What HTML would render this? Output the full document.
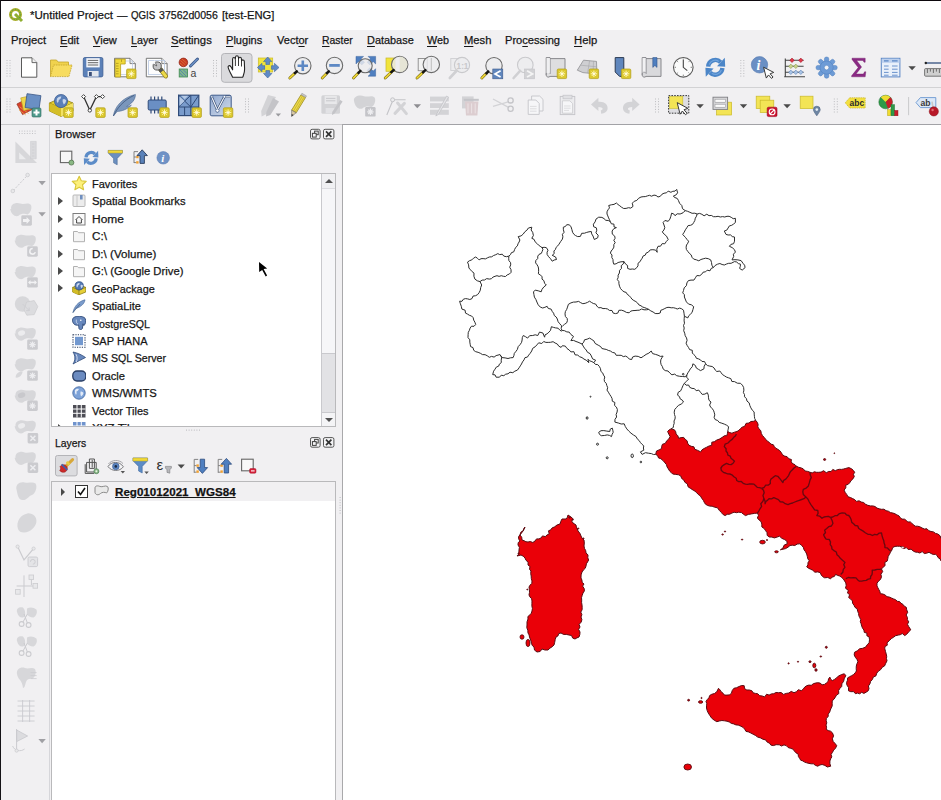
<!DOCTYPE html>
<html>
<head>
<meta charset="utf-8">
<title>QGIS</title>
<style>
html,body{margin:0;padding:0;overflow:hidden;}
body{width:941px;height:800px;overflow:hidden;background:#f0f0f0;font-family:"Liberation Sans",sans-serif;font-size:12px;color:#111;position:relative;}
.abs{position:absolute;}
.t{position:absolute;white-space:nowrap;line-height:14px;color:#161616;-webkit-text-stroke:0.25px #161616;}
#title{left:0;top:0;width:941px;height:30px;background:#fff;}
#menubar{left:0;top:30px;width:941px;height:22px;background:#f1f0f2;}

#menubar u{text-decoration-thickness:1px;text-underline-offset:2.2px;}
#tb1{left:0;top:52px;width:941px;height:35px;background:#f1f0f2;}
#tb2{left:0;top:88px;width:941px;height:36px;background:#f1f0f2;}
.hline{position:absolute;left:0;width:941px;height:1px;background:#d2d2d4;}
#lefttb{left:0;top:125px;width:50px;height:675px;background:#f1f0f2;}
#browser{left:50px;top:125px;width:292px;height:310px;background:#f1f0f2;}
#layers{left:50px;top:435px;width:292px;height:365px;overflow:hidden;background:#f1f0f2;}
.tree{position:absolute;background:#fff;border:1px solid #b9b9bb;box-sizing:border-box;overflow:hidden;}
#canvas{left:342px;top:124px;width:599px;height:676px;background:#fff;border-left:1px solid #a9a9ab;border-top:1px solid #a2a2a6;box-sizing:border-box;}
.row{position:absolute;left:0;width:270px;height:17.45px;}
.row .t{left:40px;top:1.5px;font-size:12.2px;}
.arr{position:absolute;left:6px;top:4.5px;width:0;height:0;border-left:5px solid #4a4a4a;border-top:4px solid transparent;border-bottom:4px solid transparent;}
.ic{position:absolute;}
#edge-top{left:0;top:0;width:941px;height:1px;background:#0c080c;}
#edge-left{left:0;top:0;width:1px;height:800px;background:#141216;}
</style>
</head>
<body>
<!-- TITLE BAR -->
<div id="title" class="abs">
  <svg class="ic" style="left:8px;top:7px" width="16" height="16" viewBox="0 0 16 16"><circle cx="7.5" cy="7.5" r="5" fill="none" stroke="#a9ae2b" stroke-width="3"/><path d="M7 7 L14 14" stroke="#8fae30" stroke-width="3"/><circle cx="7.5" cy="7.5" r="5" fill="none" stroke="#3fa04a" stroke-width="1" stroke-dasharray="1.2 1.6"/></svg>
  <span class="t" style="left:29.5px;top:8.2px;font-size:11.7px;transform-origin:0 0;transform:scaleX(0.9903);">*Untitled Project</span>
  <span class="t" style="left:117px;top:8.2px;font-size:11.7px;transform-origin:0 0;transform:scaleX(0.8984);">—</span>
  <span class="t" style="left:131.2px;top:8.2px;font-size:11.7px;transform-origin:0 0;transform:scaleX(0.8312);">QGIS</span>
  <span class="t" style="left:159.2px;top:8.2px;font-size:11.7px;transform-origin:0 0;transform:scaleX(0.9044);">37562d0056</span>
  <span class="t" style="left:221.5px;top:8.2px;font-size:11.7px;transform-origin:0 0;transform:scaleX(0.9622);">[test-ENG]</span>
</div>
<!-- MENU BAR -->
<div id="menubar" class="abs">
  <span class="t" style="left:11.2px;top:2.5px;font-size:11.7px;transform-origin:0 0;transform:scaleX(0.9614);">Pro<u>j</u>ect</span>
  <span class="t" style="left:60px;top:2.5px;font-size:11.7px;transform-origin:0 0;transform:scaleX(0.9526);"><u>E</u>dit</span>
  <span class="t" style="left:93.2px;top:2.5px;font-size:11.7px;transform-origin:0 0;transform:scaleX(0.9467);"><u>V</u>iew</span>
  <span class="t" style="left:131.2px;top:2.5px;font-size:11.7px;transform-origin:0 0;transform:scaleX(0.9158);"><u>L</u>ayer</span>
  <span class="t" style="left:171.2px;top:2.5px;font-size:11.7px;transform-origin:0 0;transform:scaleX(0.9660);"><u>S</u>ettings</span>
  <span class="t" style="left:226.2px;top:2.5px;font-size:11.7px;transform-origin:0 0;transform:scaleX(0.9467);"><u>P</u>lugins</span>
  <span class="t" style="left:277.4px;top:2.5px;font-size:11.7px;transform-origin:0 0;transform:scaleX(0.9436);">Vect<u>o</u>r</span>
  <span class="t" style="left:322.4px;top:2.5px;font-size:11.7px;transform-origin:0 0;transform:scaleX(0.8915);"><u>R</u>aster</span>
  <span class="t" style="left:366.9px;top:2.5px;font-size:11.7px;transform-origin:0 0;transform:scaleX(0.9331);"><u>D</u>atabase</span>
  <span class="t" style="left:427.3px;top:2.5px;font-size:11.7px;transform-origin:0 0;transform:scaleX(0.9227);"><u>W</u>eb</span>
  <span class="t" style="left:464.2px;top:2.5px;font-size:11.7px;transform-origin:0 0;transform:scaleX(0.9612);"><u>M</u>esh</span>
  <span class="t" style="left:505.4px;top:2.5px;font-size:11.7px;transform-origin:0 0;transform:scaleX(0.9508);">Pro<u>c</u>essing</span>
  <span class="t" style="left:574.1px;top:2.5px;font-size:11.7px;transform-origin:0 0;transform:scaleX(0.9642);"><u>H</u>elp</span>
</div>
<!-- TOOLBARS -->
<div id="tb1" class="abs"><svg class="abs" style="left:0;top:0" width="941" height="35" viewBox="0 52 941 35">
<rect x="6.5" y="60.0" width="1" height="1" fill="#bdbdc0"/><rect x="9.5" y="60.0" width="1" height="1" fill="#bdbdc0"/><rect x="6.5" y="62.6" width="1" height="1" fill="#bdbdc0"/><rect x="9.5" y="62.6" width="1" height="1" fill="#bdbdc0"/><rect x="6.5" y="65.2" width="1" height="1" fill="#bdbdc0"/><rect x="9.5" y="65.2" width="1" height="1" fill="#bdbdc0"/><rect x="6.5" y="67.8" width="1" height="1" fill="#bdbdc0"/><rect x="9.5" y="67.8" width="1" height="1" fill="#bdbdc0"/><rect x="6.5" y="70.4" width="1" height="1" fill="#bdbdc0"/><rect x="9.5" y="70.4" width="1" height="1" fill="#bdbdc0"/><rect x="6.5" y="73.0" width="1" height="1" fill="#bdbdc0"/><rect x="9.5" y="73.0" width="1" height="1" fill="#bdbdc0"/><rect x="6.5" y="75.6" width="1" height="1" fill="#bdbdc0"/><rect x="9.5" y="75.6" width="1" height="1" fill="#bdbdc0"/>
<path d="M21.5 57.8 h10.5 l4.8 4.8 v14.6 h-15.3 z" fill="#fff" stroke="#5a5a5a" stroke-width="1"/><path d="M32 57.8 v4.8 h4.8" fill="#f0f0f0" stroke="#5a5a5a" stroke-width="0.9"/>
<path d="M50.5 76.5 v-16.5 h6 l1.5 2 h10.5 v3" fill="#f0d24e" stroke="#c4a52c" stroke-width="0.8"/><path d="M50.5 76.6 l3 -11.6 h18.6 l-3.2 11.6 z" fill="#f7dc60" stroke="#c4a52c" stroke-width="0.8" stroke-dasharray="1.6 0.8"/>
<rect x="83.3" y="57.5" width="19.6" height="19.4" rx="1.6" fill="#5b80b8" stroke="#3e5e94" stroke-width="0.8"/><rect x="86.3" y="58.2" width="13.4" height="9.2" fill="#f4f6fa"/><path d="M87.8 60.4 h10.4 M87.8 62.7 h10.4 M87.8 65 h10.4" stroke="#555" stroke-width="0.9"/><rect x="87.6" y="71" width="11" height="5.6" fill="#e3e7ee"/><rect x="89" y="72" width="2.8" height="4" fill="#3b4f78"/>
<path d="M114.5 58.3 h15.5 l5.3 5.3 v13.2 h-20.8 z" fill="#fdfdfd" stroke="#6a6a6a" stroke-width="0.9"/><path d="M130 58.3 v5.3 h5.3" fill="#eee" stroke="#6a6a6a" stroke-width="0.8"/><rect x="117" y="61" width="15.5" height="13.5" fill="none" stroke="#b8c8e2" stroke-width="0.7"/><path d="M115.2 59 h10 v5 h-4.6 v13 h-5.4 z" fill="#efd838" stroke="#b89f1c" stroke-width="0.8"/><path d="M116 66 h2.6 M116 68.6 h2.6 M116 71.2 h2.6 M116 73.8 h2.6 M116 63.4 h2.6 M121.5 59.5 v2.4" stroke="#a08a18" stroke-width="0.7"/>
<rect x="126.6" y="69.0" width="9.4" height="9.6" rx="1.2" fill="#dcc92e" stroke="#b09c18" stroke-width="0.7"/><path d="M131.3 70.6 v6.4 M128.1 73.8 h6.4 M129.1 71.6 l4.4 4.4 M133.5 71.6 l-4.4 4.4" stroke="#fff6b8" stroke-width="1" fill="none"/><circle cx="131.3" cy="73.8" r="1.1" fill="#fffbe0"/>
<path d="M146.3 58.3 h15.5 l5.3 5.3 v13.2 h-20.8 z" fill="#fdfdfd" stroke="#6a6a6a" stroke-width="0.9"/><path d="M161.8 58.3 v5.3 h5.3" fill="#eee" stroke="#6a6a6a" stroke-width="0.8"/><rect x="148.6" y="60.6" width="16" height="14" fill="none" stroke="#b8c8e2" stroke-width="0.8"/>
<path d="M160.4 69.4 L165.8 76.2" stroke="#8a7a1a" stroke-width="4.4" stroke-linecap="round"/><path d="M160.4 69.4 L165.8 76.2" stroke="#ecd94a" stroke-width="3" stroke-linecap="round"/><path d="M160.2 69.2 L162 71.400" stroke="#555" stroke-width="4.4"/><circle cx="157.2" cy="66" r="4.1" fill="#c4c4c6" stroke="#4a4a4a" stroke-width="0.9"/><path d="M157.4 66.200 L151.800 63.400 L154.600 60.200 Z" fill="#fbfbfd"/><path d="M153.500 64.200 L156.800 65.900 L155.300 62.300" fill="none" stroke="#4a4a4a" stroke-width="0.8"/>
<circle cx="183.4" cy="62.4" r="4.3" fill="#c83a24" stroke="#8c2414" stroke-width="0.7"/><path d="M180.5 60.5 l5 4.5 M182 59 l4.5 4 M180 63 l3.5 3" stroke="#e0903a" stroke-width="0.6"/><path d="M190.5 66 L197.5 59" stroke="#3d5a8a" stroke-width="3" stroke-linecap="round"/><path d="M190.8 65.7 L197.2 59.3" stroke="#6a8fc4" stroke-width="1.6" stroke-linecap="round"/><rect x="179.2" y="69" width="8.4" height="8" fill="#7fb58c" stroke="#3c8a4e" stroke-width="0.8"/><path d="M180 70 l6.5 6.5 M183 69.5 l4 4 M179.8 73 l3.6 3.6" stroke="#4d7fae" stroke-width="0.8"/><text x="190.6" y="77" font-family="Liberation Sans" font-size="10.5" fill="#444">a</text>
<rect x="213.0" y="60.0" width="1" height="1" fill="#bdbdc0"/><rect x="216.0" y="60.0" width="1" height="1" fill="#bdbdc0"/><rect x="213.0" y="62.6" width="1" height="1" fill="#bdbdc0"/><rect x="216.0" y="62.6" width="1" height="1" fill="#bdbdc0"/><rect x="213.0" y="65.2" width="1" height="1" fill="#bdbdc0"/><rect x="216.0" y="65.2" width="1" height="1" fill="#bdbdc0"/><rect x="213.0" y="67.8" width="1" height="1" fill="#bdbdc0"/><rect x="216.0" y="67.8" width="1" height="1" fill="#bdbdc0"/><rect x="213.0" y="70.4" width="1" height="1" fill="#bdbdc0"/><rect x="216.0" y="70.4" width="1" height="1" fill="#bdbdc0"/><rect x="213.0" y="73.0" width="1" height="1" fill="#bdbdc0"/><rect x="216.0" y="73.0" width="1" height="1" fill="#bdbdc0"/><rect x="213.0" y="75.6" width="1" height="1" fill="#bdbdc0"/><rect x="216.0" y="75.6" width="1" height="1" fill="#bdbdc0"/>
<rect x="221.5" y="53.5" width="30.5" height="28.8" rx="3" fill="#dadadd" stroke="#b4b4b8" stroke-width="1"/>
<path d="M232.6 77.2 C231 74 229 70.5 228.2 67.6 C227.6 65.6 229.6 64.8 230.8 66.6 L232.6 69.8 L232.6 59.2 C232.6 57 235.2 57 235.3 59.2 L235.5 57.3 C235.6 55.2 238.3 55.2 238.4 57.3 L238.6 58.6 C238.8 56.8 241.3 56.9 241.4 58.8 L241.6 61 C241.9 59.4 244.2 59.6 244.3 61.4 L244.6 69 C244.7 72.5 243.6 74.6 242.8 77.2 Z" fill="#fff" stroke="#222" stroke-width="1.1" stroke-linejoin="round"/><path d="M235.4 59.5 v6.5 M238.5 58.5 v7.5 M241.5 61 v5.5" stroke="#222" stroke-width="0.9"/>
<rect x="258.3" y="58" width="14.4" height="14" fill="#f1e43c" stroke="#c9b92a" stroke-width="0.7"/>
<g fill="#5f8ac6" stroke="#40679f" stroke-width="0.6"><path d="M267.7 57 l4.2 4.6 h-2.4 v3 h-3.6 v-3 h-2.4 z"/><path d="M267.7 78 l4.2 -4.6 h-2.4 v-3 h-3.6 v3 h-2.4 z"/><path d="M257.4 67.5 l4.6 -4.2 v2.4 h3 v3.6 h-3 v2.4 z"/><path d="M279 67.5 l-4.6 -4.2 v2.4 h-3 v3.6 h3 v2.4 z"/></g><rect x="265.2" y="65" width="5" height="5" fill="#f1e43c"/>
<circle cx="302.8" cy="65.7" r="8.2" fill="#ebebee" fill-opacity="0.82" stroke="#6a6a6a" stroke-width="1.1"/><path d="M294.9 73.2 L289.8 78.0" stroke="#7a6a10" stroke-width="2.8" stroke-linecap="round"/><path d="M294.9 73.2 L289.8 78.0" stroke="#f0d834" stroke-width="1.7" stroke-linecap="round"/><path d="M296.8 71.3 L294.9 73.2" stroke="#151515" stroke-width="2.5" stroke-linecap="round"/>
<path d="M297.6 65.7 h10.4 M302.8 60.5 v10.4" stroke="#5d88c4" stroke-width="2.6"/>
<circle cx="334.5" cy="65.4" r="8.2" fill="#ebebee" fill-opacity="0.82" stroke="#6a6a6a" stroke-width="1.1"/><path d="M326.9 73.2 L322.2 78.0" stroke="#7a6a10" stroke-width="2.8" stroke-linecap="round"/><path d="M326.9 73.2 L322.2 78.0" stroke="#f0d834" stroke-width="1.7" stroke-linecap="round"/><path d="M328.8 71.3 L326.9 73.2" stroke="#151515" stroke-width="2.5" stroke-linecap="round"/>
<path d="M329.2 65.4 h10.6" stroke="#5d88c4" stroke-width="2.8"/>
<g fill="#4f7fc0" stroke="#3a639c" stroke-width="0.5"><path d="M356 56.4 h7.5 l-2.4 2.4 l3.4 3.4 l-2.7 2.7 l-3.4 -3.4 l-2.4 2.4 z"/><path d="M375.6 56.4 v7.5 l-2.4 -2.4 l-3.4 3.4 l-2.7 -2.7 l3.4 -3.4 l-2.4 -2.4 z"/><path d="M375.6 76.2 h-7.5 l2.4 -2.4 l-3.4 -3.4 l2.7 -2.7 l3.4 3.4 l2.4 -2.4 z"/></g>
<circle cx="365.2" cy="65.8" r="7.0" fill="#ebebee" fill-opacity="0.82" stroke="#6a6a6a" stroke-width="1.1"/><path d="M358.4 72.9 L353.5 78.0" stroke="#7a6a10" stroke-width="2.8" stroke-linecap="round"/><path d="M358.4 72.9 L353.5 78.0" stroke="#f0d834" stroke-width="1.7" stroke-linecap="round"/><path d="M360.4 70.9 L358.4 72.9" stroke="#151515" stroke-width="2.5" stroke-linecap="round"/>
<rect x="386" y="58" width="9" height="13.3" fill="#f1e43c" stroke="#c9b92a" stroke-width="0.7"/>
<circle cx="399.7" cy="64.4" r="8.2" fill="#ebebee" fill-opacity="0.82" stroke="#6a6a6a" stroke-width="1.1"/><path d="M391.3 72.2 L385.2 78.0" stroke="#7a6a10" stroke-width="2.8" stroke-linecap="round"/><path d="M391.3 72.2 L385.2 78.0" stroke="#f0d834" stroke-width="1.7" stroke-linecap="round"/><path d="M393.7 70.0 L391.3 72.2" stroke="#151515" stroke-width="2.5" stroke-linecap="round"/>
<path d="M399.7 56.6 a7.8 7.8 0 0 1 0 15.6 z" fill="#e4e2cf" opacity="0.8"/>
<rect x="418.2" y="58.5" width="9" height="12.2" fill="#f2f2f2" stroke="#8a8a8a" stroke-width="0.9"/>
<circle cx="431.3" cy="64.4" r="8.2" fill="#ebebee" fill-opacity="0.82" stroke="#6a6a6a" stroke-width="1.1"/><path d="M423.0 72.3 L417.0 78.0" stroke="#7a6a10" stroke-width="2.8" stroke-linecap="round"/><path d="M423.0 72.3 L417.0 78.0" stroke="#f0d834" stroke-width="1.7" stroke-linecap="round"/><path d="M425.4 70.1 L423.0 72.3" stroke="#151515" stroke-width="2.5" stroke-linecap="round"/>
<path d="M431.3 58 v12.6" stroke="#bdbdbd" stroke-width="1"/>
<rect x="450.8" y="58.5" width="8" height="12" fill="#ececee" stroke="#cfcfd2" stroke-width="0.9"/>
<circle cx="462.0" cy="65.0" r="7.6" fill="#ececee" fill-opacity="0.82" stroke="#c9c9cc" stroke-width="1.1"/><path d="M456.8 70.5 L449.8 78.0" stroke="#d0d0d3" stroke-width="2.6" stroke-linecap="round"/>
<text x="456.6" y="69" font-family="Liberation Sans" font-weight="bold" font-size="8.2" fill="#c8c8cb">1:1</text>
<circle cx="494.0" cy="65.7" r="8.2" fill="#ebebee" fill-opacity="0.82" stroke="#6a6a6a" stroke-width="1.1"/><path d="M486.4 73.3 L481.8 78.0" stroke="#7a6a10" stroke-width="2.8" stroke-linecap="round"/><path d="M486.4 73.3 L481.8 78.0" stroke="#f0d834" stroke-width="1.7" stroke-linecap="round"/><path d="M488.2 71.5 L486.4 73.3" stroke="#151515" stroke-width="2.5" stroke-linecap="round"/>
<rect x="492.8" y="69" width="10" height="9.8" fill="#5f86bd" stroke="#3d5a8a" stroke-width="0.6"/><path d="M500.6 70.8 l-5.6 3.1 l5.6 3.1" fill="none" stroke="#fff" stroke-width="1.7"/>
<circle cx="525.3" cy="65.0" r="7.8" fill="#ececee" fill-opacity="0.82" stroke="#c9c9cc" stroke-width="1.1"/><path d="M520.1 70.8 L513.6 78.0" stroke="#d0d0d3" stroke-width="2.6" stroke-linecap="round"/>
<rect x="524.6" y="69" width="10" height="9.8" fill="#d2d2d5" stroke="#c2c2c6" stroke-width="0.6"/><path d="M527 70.8 l5.6 3.1 l-5.6 3.1" fill="none" stroke="#f4f4f4" stroke-width="1.7"/>
<path d="M546.2 57.6 h3.8 v1 h15 v17.8 h-15 a2.2 2.2 0 0 1 -3.8 -1.2 z" fill="#dedee0" stroke="#7e7e82" stroke-width="0.9"/><path d="M550.2 58.4 v15.2 a2 2 0 0 0 -4 1.4" fill="none" stroke="#8c8c90" stroke-width="0.8"/><rect x="546.6" y="58" width="3.2" height="15" fill="#efeff1"/>
<rect x="557.2" y="69.0" width="9.4" height="9.6" rx="1.2" fill="#dcc92e" stroke="#b09c18" stroke-width="0.7"/><path d="M561.9 70.6 v6.4 M558.7 73.8 h6.4 M559.7 71.6 l4.4 4.4 M564.1 71.6 l-4.4 4.4" stroke="#fff6b8" stroke-width="1" fill="none"/><circle cx="561.9" cy="73.8" r="1.1" fill="#fffbe0"/>
<path d="M583.5 60.2 l13 1.2 l0.4 12.6 l-14 -1.4 l-5.6 -2.4 z" fill="#cfcfd2" stroke="#8e8e92" stroke-width="0.8"/><path d="M580.6 65.2 l16 1.6 M589.6 60.8 l-2 12.4 M593.5 61 l-0.5 13" stroke="#a6a6aa" stroke-width="0.6" fill="none"/>
<rect x="589.2" y="69.0" width="9.4" height="9.6" rx="1.2" fill="#dcc92e" stroke="#b09c18" stroke-width="0.7"/><path d="M593.9 70.6 v6.4 M590.7 73.8 h6.4 M591.7 71.6 l4.4 4.4 M596.1 71.6 l-4.4 4.4" stroke="#fff6b8" stroke-width="1" fill="none"/><circle cx="593.9" cy="73.8" r="1.1" fill="#fffbe0"/>
<path d="M615.2 57.6 h8.6 v18.8 h-4.2 l-4.4 -4.4 z" fill="#5f86bd" stroke="#2c3a52" stroke-width="1"/>
<rect x="621.4" y="69.0" width="9.4" height="9.6" rx="1.2" fill="#dcc92e" stroke="#b09c18" stroke-width="0.7"/><path d="M626.1 70.6 v6.4 M622.9 73.8 h6.4 M623.9 71.6 l4.4 4.4 M628.3 71.6 l-4.4 4.4" stroke="#fff6b8" stroke-width="1" fill="none"/><circle cx="626.1" cy="73.8" r="1.1" fill="#fffbe0"/>
<path d="M642.2 57.6 h3.8 v1 h15 v17.8 h-15 a2.2 2.2 0 0 1 -3.8 -1.2 z" fill="#d9d9dc" stroke="#7e7e82" stroke-width="0.9"/><rect x="642.6" y="58" width="3.2" height="15" fill="#f1f1f3"/><path d="M646.2 58.4 v15.2 a2 2 0 0 0 -4 1.4" fill="none" stroke="#8c8c90" stroke-width="0.8"/><path d="M652.8 57.6 h4.2 v9.8 l-2.1 -2 l-2.1 2 z" fill="#4f7fc0" stroke="#33558c" stroke-width="0.6"/>
<circle cx="683.3" cy="67.3" r="9.8" fill="#fbfbfb" stroke="#5a5a5a" stroke-width="1.1"/><path d="M683.3 60 v7.3 l4 3.4" fill="none" stroke="#444" stroke-width="1.1"/><path d="M683.3 58.6 v1.4 M683.3 74.6 v1.4 M674.6 67.3 h1.4 M690.6 67.3 h1.4 M677.2 61.2 l0.9 0.9 M689.4 61.2 l-0.9 0.9 M677.2 73.4 l0.9 -0.9 M689.4 73.4 l-0.9 -0.9" stroke="#666" stroke-width="0.8"/>
<g fill="none" stroke="#4c86c8" stroke-width="4.4"><path d="M708.2 66.6 A7.2 7.2 0 0 1 720.6 62.2"/><path d="M722.4 68 A7.2 7.2 0 0 1 710 72.400"/></g><g fill="#4c86c8"><path d="M717 66.200 L725.2 66.800 L724.8 57.800 Z"/><path d="M713.600 68.400 L705.400 67.800 L705.800 76.800 Z"/></g><g fill="none" stroke="#7fb0e6" stroke-width="1.2" opacity="0.7"><path d="M709.2 64.6 A6.2 6.2 0 0 1 718.8 61.400"/><path d="M721.4 70 A6.200 6.200 0 0 1 711.800 73.2"/></g>
<rect x="740.3" y="60.0" width="1" height="1" fill="#bdbdc0"/><rect x="743.3" y="60.0" width="1" height="1" fill="#bdbdc0"/><rect x="740.3" y="62.6" width="1" height="1" fill="#bdbdc0"/><rect x="743.3" y="62.6" width="1" height="1" fill="#bdbdc0"/><rect x="740.3" y="65.2" width="1" height="1" fill="#bdbdc0"/><rect x="743.3" y="65.2" width="1" height="1" fill="#bdbdc0"/><rect x="740.3" y="67.8" width="1" height="1" fill="#bdbdc0"/><rect x="743.3" y="67.8" width="1" height="1" fill="#bdbdc0"/><rect x="740.3" y="70.4" width="1" height="1" fill="#bdbdc0"/><rect x="743.3" y="70.4" width="1" height="1" fill="#bdbdc0"/><rect x="740.3" y="73.0" width="1" height="1" fill="#bdbdc0"/><rect x="743.3" y="73.0" width="1" height="1" fill="#bdbdc0"/><rect x="740.3" y="75.6" width="1" height="1" fill="#bdbdc0"/><rect x="743.3" y="75.6" width="1" height="1" fill="#bdbdc0"/>
<circle cx="759.5" cy="64.8" r="8.2" fill="#6a8fc4" stroke="#5579b0" stroke-width="0.6"/><text x="756.6" y="70" font-family="Liberation Serif" font-style="italic" font-weight="bold" font-size="14" fill="#fff">i</text><path d="M763.6 67.2 l0.4 11.2 l2.8 -2.6 l2.2 4 l1.8 -1 l-2.2 -3.8 l3.8 -0.6 z" fill="#fff" stroke="#333" stroke-width="0.9" stroke-linejoin="round" transform="rotate(-12 763.6 67.2)"/>
<path d="M785.3 58.4 V76.8 M784.2 76.8 H805 M785.3 60.3 H803.6 M785.3 66.3 H803.6 M785.3 72.3 H803.6" stroke="#444" stroke-width="1.1" fill="none"/>
<path d="M789.8 60.3 l2.2 -2.2 l2.2 2.2 l-2.2 2.2 z" fill="#e0384a" stroke="#a01828" stroke-width="0.6"/><path d="M798.6 60.3 l2.2 -2.2 l2.2 2.2 l-2.2 2.2 z" fill="#e0384a" stroke="#a01828" stroke-width="0.6"/><path d="M788.6 66.3 l2.2 -2.2 l2.2 2.2 l-2.2 2.2 z" fill="#c9d28c" stroke="#8a9a4a" stroke-width="0.6"/><path d="M793.6 66.3 l2.2 -2.2 l2.2 2.2 l-2.2 2.2 z" fill="#c9d28c" stroke="#8a9a4a" stroke-width="0.6"/><path d="M788.6 72.3 l2.2 -2.2 l2.2 2.2 l-2.2 2.2 z" fill="#a9c4e6" stroke="#5a7fb5" stroke-width="0.6"/><path d="M793.6 72.3 l2.2 -2.2 l2.2 2.2 l-2.2 2.2 z" fill="#a9c4e6" stroke="#5a7fb5" stroke-width="0.6"/><path d="M798.6 72.3 l2.2 -2.2 l2.2 2.2 l-2.2 2.2 z" fill="#a9c4e6" stroke="#5a7fb5" stroke-width="0.6"/>
<g fill="#6d9bd6" stroke="#4f7fbd" stroke-width="0.5"><rect x="824.4" y="57" width="4.4" height="7" rx="2" transform="rotate(0 826.6 67.6)"/><rect x="824.4" y="57" width="4.4" height="7" rx="2" transform="rotate(45 826.6 67.6)"/><rect x="824.4" y="57" width="4.4" height="7" rx="2" transform="rotate(90 826.6 67.6)"/><rect x="824.4" y="57" width="4.4" height="7" rx="2" transform="rotate(135 826.6 67.6)"/><rect x="824.4" y="57" width="4.4" height="7" rx="2" transform="rotate(180 826.6 67.6)"/><rect x="824.4" y="57" width="4.4" height="7" rx="2" transform="rotate(225 826.6 67.6)"/><rect x="824.4" y="57" width="4.4" height="7" rx="2" transform="rotate(270 826.6 67.6)"/><rect x="824.4" y="57" width="4.4" height="7" rx="2" transform="rotate(315 826.6 67.6)"/><circle cx="826.6" cy="67.6" r="6.6"/></g><circle cx="826.6" cy="67.6" r="2.3" fill="#f4f4f6" stroke="#4f7fbd" stroke-width="0.5"/>
<path d="M852 58.2 h13.2 v4 h-1.2 l-1 -1.8 h-6.4 l5 6.6 l-5.6 7 h7.4 l1.2 -2.2 h1.2 l-0.6 5 h-13.6 v-1 l6.6 -8.2 l-6.2 -8.2 z" fill="#8a2a84" stroke="#6e1a68" stroke-width="0.4"/>
<rect x="881.3" y="58.3" width="18.6" height="18.6" fill="#e9f0fa" stroke="#5a86c5" stroke-width="1"/><rect x="881.8" y="58.8" width="17.6" height="4" fill="#bcd0ee"/><path d="M884 60.8 h4.6 M892 60.8 h5.6" stroke="#5a86c5" stroke-width="1.2"/><path d="M884 66 h4.6 M892 66 h5.6 M884 69.2 h4.6 M892 69.2 h5.6 M884 72.4 h4.6 M892 72.4 h5.6 M884 75.2 h4.6 M892 75.2 h5.6" stroke="#6a92cc" stroke-width="1"/>
<path d="M908.4 66.2 h7.4 l-3.7 4 z" fill="#4a4a4a"/>
<path d="M925.6 63 H942" stroke="#33507e" stroke-width="1.3"/><circle cx="925.8" cy="63" r="1.2" fill="#222"/><rect x="924.6" y="68.6" width="18" height="7.6" rx="1" fill="#cfcfcf" stroke="#6a6a6a" stroke-width="0.9"/><path d="M927.4 69 v4 M930.4 69 v2.6 M933.4 69 v4 M936.4 69 v2.6 M939.4 69 v4" stroke="#555" stroke-width="0.8"/>
</svg></div>
<div class="hline" style="top:87px"></div>
<div id="tb2" class="abs"><svg class="abs" style="left:0;top:0" width="941" height="36" viewBox="0 88 941 36">
<rect x="6.5" y="98.5" width="1" height="1" fill="#bdbdc0"/><rect x="9.5" y="98.5" width="1" height="1" fill="#bdbdc0"/><rect x="6.5" y="101.1" width="1" height="1" fill="#bdbdc0"/><rect x="9.5" y="101.1" width="1" height="1" fill="#bdbdc0"/><rect x="6.5" y="103.7" width="1" height="1" fill="#bdbdc0"/><rect x="9.5" y="103.7" width="1" height="1" fill="#bdbdc0"/><rect x="6.5" y="106.3" width="1" height="1" fill="#bdbdc0"/><rect x="9.5" y="106.3" width="1" height="1" fill="#bdbdc0"/><rect x="6.5" y="108.9" width="1" height="1" fill="#bdbdc0"/><rect x="9.5" y="108.9" width="1" height="1" fill="#bdbdc0"/><rect x="6.5" y="111.5" width="1" height="1" fill="#bdbdc0"/><rect x="9.5" y="111.5" width="1" height="1" fill="#bdbdc0"/>
<rect x="19" y="100.5" width="12" height="12" fill="#d8402c" stroke="#8a2a1a" stroke-width="0.6" transform="rotate(-28 25 106.5)"/><path d="M19.5 106 l8 8 M18.5 109 l6 6" stroke="#f0a040" stroke-width="0.7" transform="rotate(-8 25 106)"/><rect x="22" y="96.5" width="12.5" height="13" fill="#efd54a" stroke="#b89a20" stroke-width="0.6" transform="rotate(-12 28 103)"/><rect x="26" y="94.6" width="14" height="14" fill="#6a8fc4" stroke="#3d5a8a" stroke-width="0.8" transform="rotate(8 33 101.6)"/>
<rect x="32" y="108" width="9" height="9" rx="1.2" fill="#4f9a8c" stroke="#2f6a5e" stroke-width="0.6"/><path d="M36.5 109.5 v6 M33.5 112.5 h6" stroke="#fff" stroke-width="2"/>
<path d="M49.4 103 L61 98 L73 103 L73 111 L61 116.4 L49.4 111 Z" fill="#e6d033" stroke="#8c7c14" stroke-width="0.8"/><path d="M49.4 103 L61 108.2 L73 103 M61 108.2 V116.4" fill="none" stroke="#8c7c14" stroke-width="0.8"/><path d="M49.4 103 L61 108.2 L61 116.4 L49.4 111 Z" fill="#d4be28"/><path d="M61 108.2 L73 103 L73 111 L61 116.4 Z" fill="#f2e264"/><circle cx="61" cy="101" r="6.6" fill="#5a7fb8" stroke="#3a5a90" stroke-width="0.7"/><path d="M57 98.6 q2 -2.6 4.4 -2 q-0.4 2.6 -2.6 3.4 q0 2 -1.2 3 q-1.6 -2 -0.6 -4.4z M62.6 99.4 q2.4 -1 3.6 1.2 q-0.4 2.8 -2.4 3.8 q-1.6 -2.4 -1.2 -5z" fill="#c8d6ec"/>
<rect x="63.8" y="107.8" width="9.4" height="9.6" rx="1.2" fill="#dcc92e" stroke="#b09c18" stroke-width="0.7"/><path d="M68.5 109.4 v6.4 M65.3 112.6 h6.4 M66.3 110.4 l4.4 4.4 M70.7 110.4 l-4.4 4.4" stroke="#fff6b8" stroke-width="1" fill="none"/><circle cx="68.5" cy="112.6" r="1.1" fill="#fffbe0"/>
<path d="M83.6 96.6 L89.8 110.2 L96.4 96.6 L102.6 96.6" fill="none" stroke="#333" stroke-width="1.3" stroke-linejoin="round"/><g fill="#fff" stroke="#333" stroke-width="0.9"><path d="M83.6 94.6 l2 2 l-2 2 l-2 -2 z"/><path d="M96.4 94.6 l2 2 l-2 2 l-2 -2 z"/><path d="M102.6 94.6 l2 2 l-2 2 l-2 -2 z"/><circle cx="89.8" cy="110.4" r="1.7"/></g>
<rect x="95.8" y="107.8" width="9.4" height="9.6" rx="1.2" fill="#dcc92e" stroke="#b09c18" stroke-width="0.7"/><path d="M100.5 109.4 v6.4 M97.3 112.6 h6.4 M98.3 110.4 l4.4 4.4 M102.7 110.4 l-4.4 4.4" stroke="#fff6b8" stroke-width="1" fill="none"/><circle cx="100.5" cy="112.6" r="1.1" fill="#fffbe0"/>
<path d="M113.4 116 C114.6 107 122 97.6 135.4 94.4 C135.6 100 131 104 126.6 106.4 C129 106 130.6 105.6 131.4 105.2 C128 109 121 111.6 117.2 111.4 Z" fill="#7a96bc" stroke="#4e6a92" stroke-width="0.6"/><path d="M113.4 116 C117 108 124 100 134 95.4" fill="none" stroke="#3f587e" stroke-width="0.8"/>
<rect x="128.0" y="107.8" width="9.4" height="9.6" rx="1.2" fill="#dcc92e" stroke="#b09c18" stroke-width="0.7"/><path d="M132.7 109.4 v6.4 M129.5 112.6 h6.4 M130.5 110.4 l4.4 4.4 M134.9 110.4 l-4.4 4.4" stroke="#fff6b8" stroke-width="1" fill="none"/><circle cx="132.7" cy="112.6" r="1.1" fill="#fffbe0"/>
<path d="M151 96.4 v4 M154.6 96.4 v4 M158.2 96.4 v4 M161.8 96.4 v4 M151 109.6 v4 M154.6 109.6 v4 M158.2 109.6 v4 M161.8 109.6 v4" stroke="#2f4a78" stroke-width="1.2"/><rect x="148.2" y="100" width="18" height="10" rx="1.2" fill="#6a8fc4" stroke="#2f4a78" stroke-width="1"/>
<rect x="159.8" y="107.8" width="9.4" height="9.6" rx="1.2" fill="#dcc92e" stroke="#b09c18" stroke-width="0.7"/><path d="M164.5 109.4 v6.4 M161.3 112.6 h6.4 M162.3 110.4 l4.4 4.4 M166.7 110.4 l-4.4 4.4" stroke="#fff6b8" stroke-width="1" fill="none"/><circle cx="164.5" cy="112.6" r="1.1" fill="#fffbe0"/>
<rect x="178.6" y="95.2" width="20.2" height="20.4" fill="#7a9ccc" stroke="#2f4a78" stroke-width="1.2"/><path d="M190.8 95.2 V107 M178.6 107 H198.8 M184.6 107 V115.6 M178.6 95.2 L190.8 107 M190.8 95.2 L178.6 107 M198.8 95.2 L190.8 107 M190.8 107 V115.6" stroke="#2f4a78" stroke-width="1" fill="none"/><path d="M179.6 96.6 L184.7 101.1 L179.6 105.8z M181.2 95.8 h7 l-3.5 3.4z" fill="#b4c8e4"/>
<rect x="192.0" y="107.8" width="9.4" height="9.6" rx="1.2" fill="#dcc92e" stroke="#b09c18" stroke-width="0.7"/><path d="M196.7 109.4 v6.4 M193.5 112.6 h6.4 M194.5 110.4 l4.4 4.4 M198.9 110.4 l-4.4 4.4" stroke="#fff6b8" stroke-width="1" fill="none"/><circle cx="196.7" cy="112.6" r="1.1" fill="#fffbe0"/>
<defs><linearGradient id="gv" x1="0" y1="0" x2="1" y2="1"><stop offset="0" stop-color="#90a8cf"/><stop offset="1" stop-color="#d2dcec"/></linearGradient></defs><rect x="210.2" y="95.2" width="21" height="20.6" rx="1.6" fill="url(#gv)" stroke="#3d5a8a" stroke-width="1"/><path d="M211.6 96.8 L217.4 110 L224.4 96.8 L230 96.8" fill="none" stroke="#2f456e" stroke-width="2.4"/><path d="M211.6 96.8 L217.4 110 L224.4 96.8 L230 96.8" fill="none" stroke="#f4f6fa" stroke-width="1.2"/><circle cx="217.4" cy="110.6" r="1.7" fill="#fff" stroke="#3d5a8a" stroke-width="0.7"/><circle cx="224.4" cy="96.8" r="1.3" fill="#fff" stroke="#3d5a8a" stroke-width="0.6"/><circle cx="211.8" cy="96.8" r="1.1" fill="#fff" stroke="#3d5a8a" stroke-width="0.6"/>
<rect x="223.4" y="107.8" width="9.4" height="9.6" rx="1.2" fill="#dcc92e" stroke="#b09c18" stroke-width="0.7"/><path d="M228.1 109.4 v6.4 M224.9 112.6 h6.4 M225.9 110.4 l4.4 4.4 M230.3 110.4 l-4.4 4.4" stroke="#fff6b8" stroke-width="1" fill="none"/><circle cx="228.1" cy="112.6" r="1.1" fill="#fffbe0"/>
<rect x="245.0" y="98.5" width="1" height="1" fill="#bdbdc0"/><rect x="248.0" y="98.5" width="1" height="1" fill="#bdbdc0"/><rect x="245.0" y="101.1" width="1" height="1" fill="#bdbdc0"/><rect x="248.0" y="101.1" width="1" height="1" fill="#bdbdc0"/><rect x="245.0" y="103.7" width="1" height="1" fill="#bdbdc0"/><rect x="248.0" y="103.7" width="1" height="1" fill="#bdbdc0"/><rect x="245.0" y="106.3" width="1" height="1" fill="#bdbdc0"/><rect x="248.0" y="106.3" width="1" height="1" fill="#bdbdc0"/><rect x="245.0" y="108.9" width="1" height="1" fill="#bdbdc0"/><rect x="248.0" y="108.9" width="1" height="1" fill="#bdbdc0"/><rect x="245.0" y="111.5" width="1" height="1" fill="#bdbdc0"/><rect x="248.0" y="111.5" width="1" height="1" fill="#bdbdc0"/>
<g fill="#d3d3d6"><path d="M268 95 l8 2 l-9.4 17 l-5 2.4 l-0.4 -5.4 z"/><path d="M273 98 l6 3.6 l-8.6 13.4 l-4.4 1.6 l0.4 -4.6 z" fill="#c4c4c8"/></g>
<path d="M275.6 113.4 h5.4 l-2.7 3 z" fill="#9a9a9e"/>
<path d="M301 94.8 l4.6 2.6 l-9.4 15.4 l-4.6 -2.6 z" fill="#ecd948" stroke="#9a8a1e" stroke-width="0.8"/><path d="M302.6 95.8 l-9.2 15.4 M304.2 96.8 l-9.2 15.4" stroke="#b8a42a" stroke-width="0.6"/><path d="M291.6 110.2 l4.6 2.6 l-4.6 3.6 z" fill="#d8c8a4" stroke="#6a6a6a" stroke-width="0.6"/><path d="M291.7 114 l1.8 1 l-1.9 1.5 z" fill="#333"/><path d="M301 94.8 l4.6 2.6 l0.9 -1.5 l-4.6 -2.6 z" fill="#c8c8c8" stroke="#8a8a8a" stroke-width="0.5"/>
<rect x="321.4" y="95.2" width="18.6" height="18.6" rx="1.5" fill="#d3d3d6"/><rect x="324.6" y="96" width="12.2" height="8" fill="#e8e8ea"/><path d="M326 98.4 h9.4 M326 100.8 h9.4" stroke="#c4c4c8" stroke-width="0.9"/><rect x="325.6" y="108" width="9" height="5.4" fill="#e2e2e5"/><path d="M342.6 101.6 l-8 12 l-2.6 1.4 l0.2 -3 l8 -12 z" fill="#c4c4c8"/>
<path d="M354 101 C353 96 360 94.4 364 96.2 C368 97.6 371.6 94.6 374.6 97.4 C376.4 100.6 374 106 371.4 107 C368 106 364.6 106.4 362.4 108.4 C359 110 355 107 354 101 Z" fill="#d3d3d6"/>
<rect x="365.2" y="107" width="10.4" height="9.6" rx="1.2" fill="#c4c4c8"/><path d="M370.4 108.6 v6.4 M367.2 111.8 h6.4 M368.2 109.6 l4.4 4.4 M372.6 109.6 l-4.4 4.4" stroke="#ededf0" stroke-width="1.2"/>
<path d="M392.6 101 L386.8 115 M394.4 99.8 H405.6" stroke="#c4c4c8" stroke-width="1.1" fill="none"/><circle cx="392.6" cy="99.8" r="2" fill="#ececee" stroke="#c4c4c8" stroke-width="1"/><path d="M395 113.4 L404.4 103.4 M397.6 103 L406.4 113.6" stroke="#d3d3d6" stroke-width="3" stroke-linecap="round"/>
<path d="M413.6 104.2 h7.4 l-3.7 4 z" fill="#8e8e92"/>
<g fill="#d3d3d6"><rect x="430" y="96.6" width="18.8" height="4.8"/><rect x="430" y="103.2" width="18.8" height="4.8"/><rect x="430" y="109.8" width="18.8" height="5"/></g><path d="M446.6 96 l-9.6 17.4 l-1.2 2.6 l2.6 -1.6 l10 -17 z" fill="#e4e4e7" stroke="#c4c4c8" stroke-width="0.8"/>
<rect x="462" y="96.4" width="11.6" height="12" fill="#d3d3d6"/><path d="M463.8 98.8 h15 v2 h-15z" fill="#c4c4c8"/><path d="M465 101.4 h13.4 l-1 14.2 h-11.4 z" fill="#dccdd0"/><path d="M468 103.4 v10 M471.6 103.4 v10 M475.2 103.4 v10" stroke="#ebe2e4" stroke-width="1"/>
<path d="M493 99 L509 107.6 M493 106.4 L509 101.6" stroke="#d3d3d6" stroke-width="1.4" fill="none"/><circle cx="510.6" cy="100.4" r="2.6" fill="none" stroke="#c4c4c8" stroke-width="1.3"/><circle cx="510.6" cy="108.8" r="2.6" fill="none" stroke="#c4c4c8" stroke-width="1.3"/>
<path d="M531.6 96 h8 l3.4 3.4 v11.6 h-11.4 z" fill="#f4f4f6" stroke="#c4c4c8" stroke-width="0.9"/><path d="M528.2 100 h7.6 l3.4 3.4 v11 h-11 z" fill="#f6f6f8" stroke="#c4c4c8" stroke-width="0.9"/><path d="M530 106.4 h6.6 M530 108.8 h6.6 M530 111.2 h6.6" stroke="#d3d3d6" stroke-width="0.7"/>
<rect x="560.2" y="96.4" width="14.6" height="18.2" fill="#ececee" stroke="#c4c4c8" stroke-width="0.9"/><rect x="563" y="95.2" width="9" height="3.6" fill="#e0e0e3" stroke="#c4c4c8" stroke-width="0.7"/><path d="M562.4 100.8 h7.4 l2.8 2.8 v9.6 h-10.2 z" fill="#f6f6f8" stroke="#c4c4c8" stroke-width="0.7"/><path d="M564 106 h6.6 M564 108.2 h6.6 M564 110.4 h5" stroke="#d3d3d6" stroke-width="0.7"/>
<path d="M591 104.6 l7.4 -6.8 v4 c6 -0.6 9.6 2.4 9.2 7 c-0.4 3 -3 4.8 -6.4 5 l-0.4 -3.4 c2.6 -0.6 3 -3.2 -2.4 -3.4 v4 z" fill="#d3d3d6"/>
<path d="M639.6 104.6 l-7.4 -6.8 v4 c-6 -0.6 -9.6 2.4 -9.2 7 c0.4 3 3 4.8 6.4 5 l0.4 -3.4 c-2.6 -0.6 -3 -3.2 2.4 -3.4 v4 z" fill="#d3d3d6"/>
<rect x="655.0" y="98.5" width="1" height="1" fill="#bdbdc0"/><rect x="658.0" y="98.5" width="1" height="1" fill="#bdbdc0"/><rect x="655.0" y="101.1" width="1" height="1" fill="#bdbdc0"/><rect x="658.0" y="101.1" width="1" height="1" fill="#bdbdc0"/><rect x="655.0" y="103.7" width="1" height="1" fill="#bdbdc0"/><rect x="658.0" y="103.7" width="1" height="1" fill="#bdbdc0"/><rect x="655.0" y="106.3" width="1" height="1" fill="#bdbdc0"/><rect x="658.0" y="106.3" width="1" height="1" fill="#bdbdc0"/><rect x="655.0" y="108.9" width="1" height="1" fill="#bdbdc0"/><rect x="658.0" y="108.9" width="1" height="1" fill="#bdbdc0"/><rect x="655.0" y="111.5" width="1" height="1" fill="#bdbdc0"/><rect x="658.0" y="111.5" width="1" height="1" fill="#bdbdc0"/>
<rect x="668.6" y="95.6" width="20.2" height="17.6" fill="#dedee2" stroke="#222" stroke-width="0.9" stroke-dasharray="1.6 1.2"/><rect x="669.6" y="96.6" width="13.2" height="11.8" fill="#f3e455" stroke="#c9b92a" stroke-width="0.6"/><path d="M677.2 102.6 l0.4 12 l2.9 -2.7 l2.3 4.3 l1.9 -1 l-2.3 -4.2 l4 -0.6 z" fill="#fff" stroke="#333" stroke-width="0.9" stroke-linejoin="round" transform="rotate(-12 677.2 102.6)"/>
<path d="M696.4 104.2 h7.4 l-3.7 4 z" fill="#4a4a4a"/>
<rect x="716.6" y="102.2" width="15" height="12.8" fill="#f3e455" stroke="#c9b92a" stroke-width="0.7"/><rect x="713" y="97.2" width="14.6" height="12.2" fill="#d6d6d9" stroke="#7e7e82" stroke-width="0.9"/><rect x="715" y="99.2" width="10.6" height="3" fill="#fafafa" stroke="#8a8a8e" stroke-width="0.5"/><rect x="715" y="104.2" width="10.6" height="3" fill="#fafafa" stroke="#8a8a8e" stroke-width="0.5"/>
<path d="M739.8 104.2 h7.4 l-3.7 4 z" fill="#4a4a4a"/>
<rect x="756.2" y="96.2" width="13.6" height="12.4" fill="#f3e455" stroke="#c9b92a" stroke-width="0.7"/><rect x="760.2" y="100.2" width="13.6" height="12.4" fill="#f3e455" stroke="#c9b92a" stroke-width="0.7"/><rect x="767.2" y="107.2" width="9.8" height="9.4" rx="1.4" fill="#cc1230" stroke="#98081e" stroke-width="0.6"/><circle cx="772.1" cy="111.9" r="2.9" fill="none" stroke="#fff" stroke-width="1.1"/><path d="M770 114 l4.2 -4.2" stroke="#fff" stroke-width="1.1"/>
<path d="M783.4 104.2 h7.4 l-3.7 4 z" fill="#4a4a4a"/>
<rect x="800.2" y="96.2" width="12.8" height="12.4" fill="#f3e455" stroke="#c9b92a" stroke-width="0.7"/><path d="M816.8 115.8 C814 112 813.4 110.6 813.4 109.6 a3.4 3.4 0 0 1 6.8 0 c0 1 -0.6 2.4 -3.4 6.2 z" fill="#6e86a4" stroke="#4a607e" stroke-width="0.6"/><circle cx="816.8" cy="109.6" r="1.3" fill="#e8eef6"/>
<rect x="833.8" y="98.5" width="1" height="1" fill="#bdbdc0"/><rect x="836.8" y="98.5" width="1" height="1" fill="#bdbdc0"/><rect x="833.8" y="101.1" width="1" height="1" fill="#bdbdc0"/><rect x="836.8" y="101.1" width="1" height="1" fill="#bdbdc0"/><rect x="833.8" y="103.7" width="1" height="1" fill="#bdbdc0"/><rect x="836.8" y="103.7" width="1" height="1" fill="#bdbdc0"/><rect x="833.8" y="106.3" width="1" height="1" fill="#bdbdc0"/><rect x="836.8" y="106.3" width="1" height="1" fill="#bdbdc0"/><rect x="833.8" y="108.9" width="1" height="1" fill="#bdbdc0"/><rect x="836.8" y="108.9" width="1" height="1" fill="#bdbdc0"/><rect x="833.8" y="111.5" width="1" height="1" fill="#bdbdc0"/><rect x="836.8" y="111.5" width="1" height="1" fill="#bdbdc0"/>
<path d="M845.2 102.8 l4.4 -5 h15.6 v10.2 h-15.6 z" fill="#f3e040" stroke="#c9b52a" stroke-width="0.7" stroke-dasharray="1.5 0.7"/><text x="849.6" y="106.2" font-family="Liberation Sans" font-weight="bold" font-size="8.8" fill="#2a2a2a" textLength="14.6" lengthAdjust="spacingAndGlyphs">abc</text>
<circle cx="885.6" cy="102" r="6.8" fill="#2e9a48" stroke="#1e6a30" stroke-width="0.5"/><path d="M885.6 102 L880.8 97.2 A6.8 6.8 0 0 1 890.4 97.2 Z" fill="#f0dc30"/><path d="M885.6 102 L890.4 97.2 A6.8 6.8 0 0 1 888 108.4 Z" fill="#c81e2a"/><rect x="887.4" y="109.6" width="3.6" height="6.2" fill="#f0dc30" stroke="#a8981c" stroke-width="0.4"/><rect x="891" y="104.6" width="3.6" height="11.2" fill="#2e9a48" stroke="#1e6a30" stroke-width="0.4"/><rect x="894.6" y="110.4" width="3.4" height="5.4" fill="#c81e2a" stroke="#8a1018" stroke-width="0.4"/>
<path d="M908.6 97 V115.2" stroke="#c9c9cc" stroke-width="1"/>
<path d="M916 102.6 l4.4 -5 h15.4 v10 h-15.4 z" fill="#dce8f8" stroke="#6a96d0" stroke-width="0.9"/><text x="920.6" y="106" font-family="Liberation Sans" font-weight="bold" font-size="8.6" fill="#3a3a3a">ab</text><path d="M932 101.6 l1 6" stroke="#c8c8c8" stroke-width="1.6"/><circle cx="933.8" cy="111.4" r="4.6" fill="#b81828" stroke="#8a0e1a" stroke-width="0.5"/><circle cx="932.6" cy="110" r="1.2" fill="#e06a72"/>
</svg></div>
<div class="hline" style="top:124px;background:#c9c9cb"></div>
<!-- LEFT TOOLBAR -->
<div id="lefttb" class="abs"><svg class="abs" style="left:0;top:0" width="50" height="675" viewBox="0 125 50 675">
<rect x="19.0" y="130.6" width="1" height="1" fill="#c2c2c6"/><rect x="19.0" y="133" width="1" height="1" fill="#c2c2c6"/>
<rect x="21.6" y="130.6" width="1" height="1" fill="#c2c2c6"/><rect x="21.6" y="133" width="1" height="1" fill="#c2c2c6"/>
<rect x="24.2" y="130.6" width="1" height="1" fill="#c2c2c6"/><rect x="24.2" y="133" width="1" height="1" fill="#c2c2c6"/>
<rect x="26.8" y="130.6" width="1" height="1" fill="#c2c2c6"/><rect x="26.8" y="133" width="1" height="1" fill="#c2c2c6"/>
<rect x="29.4" y="130.6" width="1" height="1" fill="#c2c2c6"/><rect x="29.4" y="133" width="1" height="1" fill="#c2c2c6"/>
<rect x="32.0" y="130.6" width="1" height="1" fill="#c2c2c6"/><rect x="32.0" y="133" width="1" height="1" fill="#c2c2c6"/>
<rect x="34.6" y="130.6" width="1" height="1" fill="#c2c2c6"/><rect x="34.6" y="133" width="1" height="1" fill="#c2c2c6"/>
<path d="M15.4 141.4 L15.4 163 L37 163 Z" fill="#d7d7da"/><path d="M19.2 152.6 L19.2 159.2 L26 159.2 Z" fill="#ececee"/><path d="M30.6 141.4 h5.6 v17.4 h-5.6 z" fill="#dadadd" stroke="#cbcbcf" stroke-width="0.6"/><path d="M32 144 h2.4 M32 147 h2.4 M32 150 h2.4 M32 153 h2.4 M32 156 h2.4" stroke="#cbcbcf" stroke-width="0.6"/>
<path d="M13.4 190.4 L27.2 175.6" stroke="#cbcbcf" stroke-width="1" stroke-dasharray="2 1.4"/><circle cx="12.8" cy="191" r="1.8" fill="#e8e8ea" stroke="#cbcbcf" stroke-width="0.8"/><circle cx="27.6" cy="175" r="1.8" fill="#e8e8ea" stroke="#cbcbcf" stroke-width="0.8"/>
<path d="M38.4 181.0 h7.4 l-3.7 4.2 z" fill="#a0a0a4"/>
<path d="M11.2 209.0 c-1 -5 5 -7 9 -5.4 c4 1.4 7.6 -1.6 10.6 1.2 c1.8 3.2 -0.6 8.6 -3.2 9.6 c-3.4 -1 -6.8 -0.6 -9 1.4 c-3.4 1.6 -7.4 -1.4 -8.4 -6.8 z" fill="#d7d7da"/>
<rect x="21.3" y="215.3" width="10.6" height="10.4" rx="1.4" fill="#cbcbcf"/><path d="M23.0 219.1 h3.6 v-2.2 l3.4 3.6 l-3.4 3.6 v-2.2 h-3.6 z" fill="#f2f2f4"/>
<path d="M38.4 212.2 h7.4 l-3.7 4.2 z" fill="#a0a0a4"/>
<path d="M15.6 240.6 c-1 -5 5 -7 9 -5.4 c4 1.4 7.6 -1.6 10.6 1.2 c1.8 3.2 -0.6 8.6 -3.2 9.6 c-3.4 -1 -6.8 -0.6 -9 1.4 c-3.4 1.6 -7.4 -1.4 -8.4 -6.8 z" fill="#d7d7da"/>
<rect x="27.2" y="246.3" width="10.6" height="10.4" rx="1.4" fill="#cbcbcf"/><path d="M35.3 252.1 a2.8 2.8 0 1 1 -2.6 -3.6" fill="none" stroke="#f2f2f4" stroke-width="1.5"/>
<path d="M15.6 272.0 c-1 -5 5 -7 9 -5.4 c4 1.4 7.6 -1.6 10.6 1.2 c1.8 3.2 -0.6 8.6 -3.2 9.6 c-3.4 -1 -6.8 -0.6 -9 1.4 c-3.4 1.6 -7.4 -1.4 -8.4 -6.8 z" fill="#d7d7da"/>
<rect x="27.2" y="277.2" width="10.6" height="10.4" rx="1.4" fill="#cbcbcf"/><path d="M28.9 282.4 h7.2" stroke="#f2f2f4" stroke-width="1.6"/><path d="M28.1 282.4 l2.4 -2.4 v4.8 z M36.9 282.4 l-2.4 -2.4 v4.8 z" fill="#f2f2f4"/>
<circle cx="22.6" cy="304" r="7.8" fill="#d7d7da"/><path d="M24 310 l2.6 -8 l7.6 -1.4 l3.6 6 l-3.6 8 l-7.4 0.6 z" fill="#dcdcdf" stroke="#cbcbcf" stroke-width="0.7"/><path d="M22.6 304 l6.6 6.6 m0 0 v-3 m0 3 h-3" stroke="#cbcbcf" stroke-width="0.8" fill="none"/>
<path d="M15.6 333.4 c-1 -5 5 -7 9 -5.4 c4 1.4 7.6 -1.6 10.6 1.2 c1.8 3.2 -0.6 8.6 -3.2 9.6 c-3.4 -1 -6.8 -0.6 -9 1.4 c-3.4 1.6 -7.4 -1.4 -8.4 -6.8 z" fill="#d7d7da"/>
<ellipse cx="21.6" cy="333" rx="3.6" ry="2.6" fill="#ececee" transform="rotate(-20 21.6 333)"/>
<rect x="27.2" y="339.4" width="10.6" height="10.4" rx="1.4" fill="#cbcbcf"/><path d="M32.5 341.4 v6.4 M29.3 344.6 h6.4 M30.3 342.4 l4.4 4.4 M34.7 342.4 l-4.4 4.4" stroke="#ededf0" stroke-width="1.2"/>
<path d="M15.6 364.2 c-1 -5 5 -7 9 -5.4 c4 1.4 7.6 -1.6 10.6 1.2 c1.8 3.2 -0.6 8.6 -3.2 9.6 c-3.4 -1 -6.8 -0.6 -9 1.4 c-3.4 1.6 -7.4 -1.4 -8.4 -6.8 z" fill="#d7d7da"/>
<path d="M15.6 377.6 c0 -4 3.6 -6.6 7 -6 c-0.4 3.6 -3 6.6 -7 6 z" fill="#d7d7da"/>
<rect x="27.2" y="370.4" width="10.6" height="10.4" rx="1.4" fill="#cbcbcf"/><path d="M32.5 372.4 v6.4 M29.3 375.6 h6.4 M30.3 373.4 l4.4 4.4 M34.7 373.4 l-4.4 4.4" stroke="#ededf0" stroke-width="1.2"/>
<path d="M15.6 395.6 c-1 -5 5 -7 9 -5.4 c4 1.4 7.6 -1.6 10.6 1.2 c1.8 3.2 -0.6 8.6 -3.2 9.6 c-3.4 -1 -6.8 -0.6 -9 1.4 c-3.4 1.6 -7.4 -1.4 -8.4 -6.8 z" fill="#d7d7da"/>
<ellipse cx="21.6" cy="395.2" rx="3.8" ry="2.6" fill="#c8c8cc" transform="rotate(-20 21.6 395.2)"/>
<rect x="27.2" y="400.6" width="10.6" height="10.4" rx="1.4" fill="#cbcbcf"/><path d="M32.5 402.6 v6.4 M29.3 405.8 h6.4 M30.3 403.6 l4.4 4.4 M34.7 403.6 l-4.4 4.4" stroke="#ededf0" stroke-width="1.2"/>
<path d="M15.6 426.2 c-1 -5 5 -7 9 -5.4 c4 1.4 7.6 -1.6 10.6 1.2 c1.8 3.2 -0.6 8.6 -3.2 9.6 c-3.4 -1 -6.8 -0.6 -9 1.4 c-3.4 1.6 -7.4 -1.4 -8.4 -6.8 z" fill="#d7d7da"/>
<ellipse cx="21.6" cy="425.8" rx="3.6" ry="2.6" fill="#ececee" transform="rotate(-20 21.6 425.8)"/>
<rect x="27.6" y="433.0" width="10.6" height="10.4" rx="1.4" fill="#cbcbcf"/><path d="M30.4 435.7 l5 5 M35.4 435.7 l-5 5" stroke="#ededf0" stroke-width="1.6"/>
<path d="M15.6 457.8 c-1 -5 5 -7 9 -5.4 c4 1.4 7.6 -1.6 10.6 1.2 c1.8 3.2 -0.6 8.6 -3.2 9.6 c-3.4 -1 -6.8 -0.6 -9 1.4 c-3.4 1.6 -7.4 -1.4 -8.4 -6.8 z" fill="#d7d7da"/>
<rect x="27.6" y="462.6" width="10.6" height="10.4" rx="1.4" fill="#cbcbcf"/><path d="M30.4 465.3 l5 5 M35.4 465.3 l-5 5" stroke="#ededf0" stroke-width="1.6"/>
<path d="M16.6 490 c-1.6 -6 3.4 -8.8 8 -7.6 c4.6 1 8 -1 11 1 c2 3.4 0 9.6 -3.6 11.6 c-4 1.4 -5 5.6 -10 5 c-4 -0.8 -4.4 -6 -5.4 -10 z" fill="#d7d7da"/>
<path d="M18 529 c-2.4 -8 3 -14.6 9.4 -15.6 c5.6 -0.4 9.6 3.4 9 8.6 c-0.8 5.4 -6 10 -12.4 10.6 c-3 0 -5.2 -1.2 -6 -3.600 z" fill="#d7d7da"/>
<path d="M17.6 546.6 L24 560 L33.6 548.6" fill="none" stroke="#cbcbcf" stroke-width="1.2"/><circle cx="17.6" cy="546.6" r="1.6" fill="#e8e8ea" stroke="#cbcbcf" stroke-width="0.8"/><circle cx="33.6" cy="548.6" r="1.6" fill="#e8e8ea" stroke="#cbcbcf" stroke-width="0.8"/><rect x="28" y="557" width="9.6" height="9.6" rx="1.4" fill="#e4e4e7" stroke="#cbcbcf" stroke-width="0.9"/><path d="M30.400 561.8 a2.4 2.4 0 1 1 2.4 2.4" fill="none" stroke="#cbcbcf" stroke-width="0.9"/>
<path d="M24 575.4 v21.6 M16.6 586 h20 M31.4 576 v9" stroke="#cbcbcf" stroke-width="1" fill="none"/><rect x="29" y="575" width="4.6" height="4.6" fill="#e8e8ea" stroke="#cbcbcf" stroke-width="0.8"/><rect x="15.6" y="589.6" width="4.6" height="4.6" fill="#e8e8ea" stroke="#cbcbcf" stroke-width="0.8"/><rect x="33" y="583.6" width="4.6" height="4.6" fill="#e8e8ea" stroke="#cbcbcf" stroke-width="0.8"/>
<path d="M17 612 c-1 -4 3 -5.6 6 -4.4 c2 2 2.6 5 2 8.400 c-2.600 3 -6.6 1.600 -8 -4 z M27 608.600 c3 -2 6.600 -1.400 9.400 0.800 c1.400 3 -0.400 7 -3 8 c-3 0 -5.400 -1 -6.600 -3.400 z" fill="#d7d7da"/><circle cx="21.6" cy="624" r="2.4" fill="none" stroke="#cbcbcf" stroke-width="1.1"/><circle cx="28.600" cy="625" r="2.4" fill="none" stroke="#cbcbcf" stroke-width="1.1"/><path d="M23 622 l4.400 -8 M27.400 623 l-3.400 -9" stroke="#cbcbcf" stroke-width="1"/>
<path d="M17 641 c-1 -4 3 -5.6 6 -4.4 c2 2 2.6 5 2 8.400 c-2.600 3 -6.6 1.600 -8 -4 z M27 637.600 c3 -2 6.600 -1.400 9.400 0.800 c1.400 3 -0.400 7 -3 8 c-3 0 -5.400 -1 -6.600 -3.400 z" fill="#d7d7da"/><circle cx="21.6" cy="653" r="2.4" fill="none" stroke="#cbcbcf" stroke-width="1.1"/><circle cx="28.600" cy="654" r="2.4" fill="none" stroke="#cbcbcf" stroke-width="1.1"/><path d="M23 651 l4.400 -8 M27.400 652 l-3.400 -9" stroke="#cbcbcf" stroke-width="1"/>
<path d="M17 674 c-1 -5 4 -7.600 8 -6 c3.400 1.400 7 -1.400 10 1 c1.800 3.600 0 8.600 -3 10 c-3 -0.600 -5 0.600 -6 3 c-1 3 -1 5.600 -3 6 c-0.600 -4 -1.400 -6 -3 -8 c-1.600 -1.600 -2.600 -3.600 -3 -6 z" fill="#d7d7da"/><path d="M30.600 672.600 h6 M30.600 675.600 h6 M30.600 678.600 h6" stroke="#cbcbcf" stroke-width="0.8"/>
<path d="M17.600 701 h17 M17.600 706 h17 M17.600 711 h17 M17.600 716 h17 M17.600 721 h17 M22.600 700 v22 M29.600 700 v22" stroke="#cbcbcf" stroke-width="0.9" fill="none"/>
<path d="M16.600 730 l11 6 l-11 5.600 z" fill="#dcdcdf" stroke="#cbcbcf" stroke-width="0.9"/><path d="M16.600 729 v23 " stroke="#cbcbcf" stroke-width="1"/><path d="M12.600 746 c2 5 8 6 12 3" fill="none" stroke="#cbcbcf" stroke-width="0.9"/><circle cx="16.600" cy="750.600" r="1.600" fill="#e8e8ea" stroke="#cbcbcf" stroke-width="0.8"/>
<path d="M38.4 739.0 h7.4 l-3.7 4.2 z" fill="#a0a0a4"/>
</svg></div>
<div class="abs" style="left:49px;top:125px;width:1px;height:675px;background:#d6d6da"></div>
<!-- BROWSER PANEL -->
<div id="browser" class="abs">
  <span class="t" style="left:5.2px;top:2px;font-size:11.7px;transform-origin:0 0;transform:scaleX(0.9516);">Browser</span>
  <svg class="abs" style="left:0;top:0" width="292" height="48" viewBox="50 125 292 48">
<rect x="310.5" y="129.3" width="9.6" height="9.6" rx="1.6" fill="#f4f4f6" stroke="#555" stroke-width="1"/><rect x="314.6" y="131.1" width="3.6" height="3.6" fill="none" stroke="#444" stroke-width="1"/><path d="M312.6 136.9 v-3.4 h3.4" fill="none" stroke="#444" stroke-width="1" transform="translate(0,0)"/><rect x="312.4" y="133.3" width="3.8" height="3.8" fill="#f4f4f6" stroke="#444" stroke-width="1"/><rect x="323.5" y="129.3" width="10.4" height="9.6" rx="1.6" fill="#f4f4f6" stroke="#555" stroke-width="1"/><path d="M326 131.4 l5.4 5.4 M331.4 131.4 l-5.4 5.4" stroke="#333" stroke-width="1.7"/>
<rect x="60.4" y="151.2" width="11.4" height="11.4" fill="#f6f6f6" stroke="#666" stroke-width="1.1"/><circle cx="71.4" cy="162.6" r="2.5" fill="#8ab884" stroke="#4a6a48" stroke-width="0.7"/>
<g fill="none" stroke="#5c8cc8" stroke-width="3.2"><path d="M86 157.400 A5.200 5.200 0 0 1 95 154.200"/><path d="M96.200 158.400 A5.200 5.200 0 0 1 87.200 161.600"/></g><g fill="#5c8cc8"><path d="M92.400 157 L98.400 157.500 L98.100 150.800 Z"/><path d="M89.800 158.800 L83.800 158.300 L84.100 165 Z"/></g>
<path d="M108.2 150.4 h14.2 v2.6 l-5.2 5.4 v6.4 l-3.6 -2 v-4.4 l-5.4 -5.4 z" fill="#6b8fc0" stroke="#4a6a96" stroke-width="0.6"/><rect x="108.2" y="150.4" width="14.2" height="2.6" fill="#f0d838" stroke="#c0a820" stroke-width="0.5"/>
<path d="M134 151.6 h4 M134 151.6 v11.4 M134 157 h2.4 M134 162.6 h2.4" stroke="#777" stroke-width="0.9" fill="none"/><rect x="136.2" y="155.8" width="2.4" height="2.4" fill="#f0a030"/><rect x="136.2" y="161.2" width="2.4" height="2.4" fill="#f0a030"/><path d="M142.2 149.8 l5.2 5.8 h-3 v7.8 h-4.4 v-7.8 h-3 z" fill="#5a82ba" stroke="#2c3e5c" stroke-width="0.9" stroke-linejoin="round"/>
<circle cx="163.2" cy="157.8" r="6.3" fill="#6f92c6" stroke="#5579b0" stroke-width="0.5"/><text x="161.2" y="161.8" font-family="Liberation Serif" font-style="italic" font-weight="bold" font-size="11" fill="#fff">i</text>
</svg>
  <div class="tree" style="left:1px;top:48px;width:285px;height:254px;">
    <svg class="ic" style="left:18.5px;top:1.20px" width="16" height="16" viewBox="-0.5 -0.3 14.6 14.6"><path d="M7 0.8 L8.9 5 L13.4 5.5 L10 8.6 L11 13.2 L7 10.8 L3 13.2 L4 8.6 L0.6 5.5 L5.1 5 Z" fill="#fdf07a" stroke="#d8c63a" stroke-width="1" stroke-linejoin="round"/></svg>
<span class="t" style="left:40.2px;top:2.95px;font-size:11.7px;transform-origin:0 0;transform:scaleX(0.9422);">Favorites</span>
<div class="arr" style="left:6px;top:23.15px"></div>
<svg class="ic" style="left:19.5px;top:20.15px" width="14" height="14" viewBox="0 0 14 14"><path d="M1.5 1.5 h3 v10 h8 v-10 h-3" fill="#f3f3f3" stroke="#b5b5b5"/><rect x="1" y="1" width="12" height="11.5" rx="1" fill="#ececec" stroke="#b8b8b8"/><rect x="4.5" y="1" width="1" height="11" fill="#c8c8c8"/><rect x="8" y="1" width="2.6" height="4.5" fill="#6f8fbf"/></svg>
<span class="t" style="left:40.2px;top:20.40px;font-size:11.7px;transform-origin:0 0;transform:scaleX(0.9594);">Spatial Bookmarks</span>
<div class="arr" style="left:6px;top:40.60px"></div>
<svg class="ic" style="left:19.5px;top:37.60px" width="14" height="14" viewBox="0 0 14 14"><rect x="1" y="1.5" width="12" height="11.5" fill="#fafafa" stroke="#7d7d7d"/><path d="M3.5 8 L7 4.5 L10.5 8 M4.6 7.5 V11 H9.4 V7.5" fill="none" stroke="#444" stroke-width="1"/></svg>
<span class="t" style="left:40.2px;top:37.85px;font-size:11.7px;transform-origin:0 0;transform:scaleX(1.0228);">Home</span>
<div class="arr" style="left:6px;top:58.05px"></div>
<svg class="ic" style="left:19.5px;top:55.05px" width="14" height="14" viewBox="0 0 14 14"><path d="M1.5 2.5 h4 l1 1.2 h6 v9 h-11 z" fill="#f5f5f5" stroke="#b0b0b0" stroke-width="1"/></svg>
<span class="t" style="left:40.2px;top:55.30px;font-size:11.7px;transform-origin:0 0;transform:scaleX(0.9975);">C:&#92;</span>
<div class="arr" style="left:6px;top:75.50px"></div>
<svg class="ic" style="left:19.5px;top:72.50px" width="14" height="14" viewBox="0 0 14 14"><path d="M1.5 2.5 h4 l1 1.2 h6 v9 h-11 z" fill="#f5f5f5" stroke="#b0b0b0" stroke-width="1"/></svg>
<span class="t" style="left:40.2px;top:72.75px;font-size:11.7px;transform-origin:0 0;transform:scaleX(0.9915);">D:&#92; (Volume)</span>
<div class="arr" style="left:6px;top:92.95px"></div>
<svg class="ic" style="left:19.5px;top:89.95px" width="14" height="14" viewBox="0 0 14 14"><path d="M1.5 2.5 h4 l1 1.2 h6 v9 h-11 z" fill="#f5f5f5" stroke="#b0b0b0" stroke-width="1"/></svg>
<span class="t" style="left:40.2px;top:90.20px;font-size:11.7px;transform-origin:0 0;transform:scaleX(0.9638);">G:&#92; (Google Drive)</span>
<div class="arr" style="left:6px;top:110.40px"></div>
<svg class="ic" style="left:19.5px;top:107.40px" width="14" height="14" viewBox="0 0 14 14"><path d="M0.6 6.4 L7 3.8 L13.8 6.4 L13.8 11 L7 13.8 L0.6 11 Z" fill="#e6cf38" stroke="#8c7c14" stroke-width="0.8"/><path d="M0.6 6.4 L7 9 L7 13.8 L0.6 11 Z" fill="#d2bc26"/><path d="M0.6 6.4 L7 9 L13.8 6.4 M7 9 V13.8" fill="none" stroke="#8c7c14" stroke-width="0.8"/><circle cx="7.2" cy="4.8" r="4.1" fill="#5478b4" stroke="#34558c" stroke-width="0.8"/><path d="M4.600 3.400 q1.600 -1.800 3.200 -1.200 q-0.300 1.800 -1.800 2.400 q0 1.400 -0.900 2 q-1.100 -1.400 -0.500 -3.200z M8.600 4 q1.600 -0.600 2.400 0.800 q-0.300 1.800 -1.600 2.400 q-1 -1.500 -0.800 -3.200z" fill="#cbd9ee"/></svg>
<span class="t" style="left:40.2px;top:107.65px;font-size:11.7px;transform-origin:0 0;transform:scaleX(0.9278);">GeoPackage</span>
<svg class="ic" style="left:19.5px;top:124.85px" width="14" height="14" viewBox="0 0 14 14"><path d="M1 13.5 C2 8 6 2.5 13 0.8 C12.5 5 8 8.5 3.5 9.5 Z" fill="#7b9ccc" stroke="#4d6f9f" stroke-width="0.7"/><path d="M1 13.5 L8 5" stroke="#3b577f" stroke-width="0.7"/></svg>
<span class="t" style="left:40.2px;top:125.10px;font-size:11.7px;transform-origin:0 0;transform:scaleX(0.9407);">SpatiaLite</span>
<svg class="ic" style="left:19.5px;top:142.30px" width="14" height="14" viewBox="0 0 14 14"><path d="M1.6 1.6 C4.6 -0.4 10.6 -0.2 13 2.2 C14.6 4.6 13.4 8.4 11.8 9.6 L11 7.8 L10.4 12.6 C9.4 14 7.400 13.800 7 12.600 L6.600 9 C4 9.800 1.400 8.600 0.600 5.600 C0.200 3.600 0.800 2.400 1.600 1.600 Z" fill="#6888bd" stroke="#2f4a78" stroke-width="0.9"/><path d="M4.400 3.600 C4 5.600 4.400 7.400 6 8.200" fill="none" stroke="#cfdcf0" stroke-width="0.8"/><circle cx="8.8" cy="4.3" r="0.8" fill="#fff"/></svg>
<span class="t" style="left:40.2px;top:142.55px;font-size:11.7px;transform-origin:0 0;transform:scaleX(0.9109);">PostgreSQL</span>
<svg class="ic" style="left:19.5px;top:159.75px" width="14" height="14" viewBox="0 0 14 14"><rect x="1" y="0.8" width="12" height="12.4" fill="none" stroke="#2c3e5e" stroke-width="1.1" stroke-dasharray="1.2 1.2"/><rect x="3" y="2.8" width="8" height="8.4" fill="#7298cf"/></svg>
<span class="t" style="left:40.2px;top:160.00px;font-size:11.7px;transform-origin:0 0;transform:scaleX(0.9422);">SAP HANA</span>
<svg class="ic" style="left:19.5px;top:177.20px" width="14" height="14" viewBox="0 0 14 14"><path d="M1 1 C6 2 10 4 13.5 6.5 C10 8.5 5 10.5 1 13 C3.5 9 3.5 5 1 1 Z" fill="#6888bd" stroke="#2f4a78" stroke-width="0.8"/><path d="M4 3.2 C5.5 6 5.5 8.5 4.2 11" fill="none" stroke="#e8eefa" stroke-width="0.8"/></svg>
<span class="t" style="left:40.2px;top:177.45px;font-size:11.7px;transform-origin:0 0;transform:scaleX(0.9090);">MS SQL Server</span>
<svg class="ic" style="left:19.5px;top:194.65px" width="14" height="14" viewBox="0 0 14 14"><rect x="0.8" y="2" width="13" height="10" rx="4.2" fill="#6b8bc0" stroke="#2a3f66" stroke-width="1.3"/></svg>
<span class="t" style="left:40.2px;top:194.90px;font-size:11.7px;transform-origin:0 0;transform:scaleX(0.9583);">Oracle</span>
<svg class="ic" style="left:19.5px;top:212.10px" width="14" height="14" viewBox="0 0 14 14"><circle cx="7" cy="7" r="6.2" fill="#7da2d8" stroke="#4a6ea6" stroke-width="0.9"/><path d="M3 4 q2 -2 4 -1 q-1 2 -2.5 2.5 q0.5 2 -0.5 3.5 q-1.5 -2 -1 -5z M8.5 5.5 q2 -0.5 3 1.5 q-0.5 2.5 -2.5 3.5 q-1 -2.5 -0.5 -5z" fill="#e4ecf8"/></svg>
<span class="t" style="left:40.2px;top:212.35px;font-size:11.7px;transform-origin:0 0;transform:scaleX(0.9598);">WMS/WMTS</span>
<svg class="ic" style="left:19.5px;top:229.55px" width="14" height="14" viewBox="0 0 14 14"><rect x="1" y="1" width="12.5" height="12.5" fill="#4d4d55"/><path d="M5 1 V13.5 M9.3 1 V13.5 M1 5 H13.5 M1 9.3 H13.5" stroke="#fff" stroke-width="1"/></svg>
<span class="t" style="left:40.2px;top:229.80px;font-size:11.7px;transform-origin:0 0;transform:scaleX(0.9351);">Vector Tiles</span>
<div class="arr" style="left:6px;top:250.00px"></div>
<svg class="ic" style="left:19.5px;top:247.00px" width="14" height="14" viewBox="0 0 14 14"><rect x="1" y="1" width="12.5" height="12.5" fill="#6f93cd"/><path d="M5 1 V13.5 M9.3 1 V13.5 M1 5 H13.5 M1 9.3 H13.5" stroke="#fff" stroke-width="1"/></svg>
<span class="t" style="left:40.2px;top:247.25px;font-size:11.7px;transform-origin:0 0;transform:scaleX(0.9997);">XYZ Tiles</span>
<div class="abs" style="left:269px;top:0;width:14px;height:252px;background:#f6f6f8;border-left:1px solid #c9c9cd"></div><div class="abs" style="left:270px;top:0;width:13px;height:14px;background:#f0f0f2;border-bottom:1px solid #dcdce0"></div><div class="abs" style="left:270px;top:239px;width:13px;height:13px;background:#f4f4f6"></div>
<div class="abs" style="left:270px;top:179px;width:13px;height:60px;background:#e2e2e5;border-top:1px solid #c9c9cd;border-bottom:1px solid #c9c9cd;box-sizing:border-box"></div>
<div class="abs" style="left:273px;top:4.5px;width:0;height:0;border-bottom:4px solid #505050;border-left:4px solid transparent;border-right:4px solid transparent"></div>
<div class="abs" style="left:273px;top:243.5px;width:0;height:0;border-top:4px solid #505050;border-left:4px solid transparent;border-right:4px solid transparent"></div>
  </div>
</div>
<!-- LAYERS PANEL -->
<div id="layers" class="abs">
  <span class="t" style="left:5.2px;top:0.5px;font-size:11.7px;transform-origin:0 0;transform:scaleX(0.8890);">Layers</span>
  <svg class="abs" style="left:0;top:0" width="292" height="46" viewBox="50 435 292 46">
<rect x="310.5" y="437.6" width="9.6" height="9.6" rx="1.6" fill="#f4f4f6" stroke="#555" stroke-width="1"/><rect x="314.6" y="439.4" width="3.6" height="3.6" fill="none" stroke="#444" stroke-width="1"/><path d="M312.6 445.2 v-3.4 h3.4" fill="none" stroke="#444" stroke-width="1" transform="translate(0,0)"/><rect x="312.4" y="441.6" width="3.8" height="3.8" fill="#f4f4f6" stroke="#444" stroke-width="1"/><rect x="323.5" y="437.6" width="10.4" height="9.6" rx="1.6" fill="#f4f4f6" stroke="#555" stroke-width="1"/><path d="M326 439.7 l5.4 5.4 M331.4 439.7 l-5.4 5.4" stroke="#333" stroke-width="1.7"/>
<rect x="55.5" y="455.5" width="21.6" height="20.4" rx="2" fill="#dcdcdf" stroke="#b4b4b8" stroke-width="1"/>
<path d="M72.6 459.6 l-6.4 6.2" stroke="#d8a83a" stroke-width="3" stroke-linecap="round"/><path d="M60 466.6 c2 -2.6 5 -2.4 6.6 -0.4 c1.6 2.2 0.6 4.6 -1.6 5.8 c-2 0.8 -4 0 -5.4 -1.6 c1.2 -0.4 1.4 -2.2 0.4 -3.8z" fill="#cc2a2a" stroke="#8a1818" stroke-width="0.5"/><path d="M61.6 464.4 l5.6 5.6" stroke="#3a62b0" stroke-width="1.6"/><path d="M66.6 461.8 l2.8 2.8" stroke="#e8d040" stroke-width="2.2"/>
<path d="M89.4 459 h5 v9.4 h-5 z M86.6 462.4 h9.6 v9.6 h-9.6 z" fill="none" stroke="#555" stroke-width="1"/><path d="M85.2 464.2 v9.2 h9" fill="none" stroke="#555" stroke-width="1"/><path d="M92.2 460 v7.6" stroke="#555" stroke-width="1"/><circle cx="96.4" cy="471.2" r="2.5" fill="#8ab884" stroke="#4a7a58" stroke-width="0.7"/><circle cx="96.4" cy="471.2" r="1" fill="#e8f4e4"/>
<path d="M108 466.6 C111 461.2 119.6 460.8 123.4 466.8 C119.6 471.8 111.6 471.6 108 466.6 Z" fill="#f2f2f4" stroke="#7a7a7e" stroke-width="1"/><circle cx="115.8" cy="466.4" r="3.3" fill="#5a84c0" stroke="#3a5a90" stroke-width="0.6"/><circle cx="115.8" cy="466.4" r="1.3" fill="#1a2a44"/><path d="M108.4 464 C111.6 459.6 119.4 459.2 123 463.6" fill="none" stroke="#9a9a9e" stroke-width="0.9"/><path d="M120.6 471 h4.4 l-2.2 2.6 z" fill="#555"/>
<path d="M133 458 h14.6 v2.8 l-5.4 5.6 v6.6 l-3.6 -2 v-4.6 l-5.6 -5.6 z" fill="#5d8cc6" stroke="#3e68a0" stroke-width="0.6"/><rect x="133" y="458" width="14.6" height="3" fill="#f0d838" stroke="#c0a820" stroke-width="0.5"/><path d="M144.4 471.4 h4.4 l-2.2 2.6 z" fill="#555"/>
<text x="156.6" y="469.6" font-family="Liberation Sans" font-size="15" fill="#333">ε</text><path d="M165.4 466.4 h6 v1.6 l-1.6 1.8 v3.4 l-2.8 -0.8 v-2.6 l-1.6 -1.8 z" fill="#b8b8bc" stroke="#7a7a7e" stroke-width="0.6"/>
<path d="M177.6 464.6 h7.2 l-3.6 3.8 z" fill="#4a4a4a"/>
<path d="M194.2 459.4 h4 M194.2 459.4 v13.4 M194.2 465.6 h2.4 M194.2 472.2 h2.4" stroke="#777" stroke-width="0.9" fill="none"/><rect x="196.4" y="464.4" width="2.4" height="2.4" fill="#f0a030"/><rect x="196.4" y="470.4" width="2.4" height="2.4" fill="#f0a030"/><path d="M202.4 473.4 l5.2 -5.8 h-3 v-8.4 h-4.4 v8.4 h-3 z" fill="#4f7fc0" stroke="#2c4a7c" stroke-width="0.8" stroke-linejoin="round"/>
<path d="M218.2 459.4 h4 M218.2 459.4 v13.4 M218.2 465.6 h2.4 M218.2 472.2 h2.4" stroke="#777" stroke-width="0.9" fill="none"/><rect x="220.4" y="464.4" width="2.4" height="2.4" fill="#f0a030"/><rect x="220.4" y="470.4" width="2.4" height="2.4" fill="#f0a030"/><path d="M226.4 458.4 l5.2 5.8 h-3 v8.8 h-4.4 v-8.8 h-3 z" fill="#4f7fc0" stroke="#2c4a7c" stroke-width="0.8" stroke-linejoin="round"/>
<rect x="241.6" y="459.2" width="11.6" height="11.6" fill="#f8f8f8" stroke="#666" stroke-width="1.1"/><rect x="249.6" y="468.6" width="6.4" height="4.6" rx="1.2" fill="#d8203a" stroke="#a01024" stroke-width="0.5"/><path d="M251 470.9 h3.6" stroke="#fff" stroke-width="1.1"/>
</svg>
  <div class="tree" style="left:1px;top:46px;width:285px;height:322px;border-bottom:none;">
    <div class="abs" style="left:0;top:0;width:283px;height:19px;background:#f1f0f2"></div>
<div class="arr" style="left:8.5px;top:5.5px;border-left-width:4.5px"></div>
<div class="abs" style="left:23px;top:3px;width:13px;height:13px;box-sizing:border-box;border:1px solid #333;background:#fff"></div>
<svg class="ic" style="left:23px;top:3px" width="13" height="13" viewBox="0 0 13 13"><path d="M3 6.5 L5.5 9.5 L10 3" fill="none" stroke="#111" stroke-width="1.6"/></svg>
<svg class="ic" style="left:41px;top:2px" width="17" height="14" viewBox="0 0 17 14"><path d="M2 4 C2 1.5 5 1.5 7 2.5 C9.5 3.5 12 1 14.5 2.5 C16 4 15 8 13.5 9 C12 8 9 8 7.5 9.5 C5.5 11.5 2.5 11 2 8.5 Z" fill="#e9e9e9" stroke="#8a8a8a" stroke-width="1"/></svg>
<span class="t" style="left:63px;top:2.5px;font-size:11.7px;transform-origin:0 0;transform:scaleX(0.9926);font-weight:bold;text-decoration:underline;color:#111;">Reg01012021_WGS84</span>
  </div>
</div>
<!-- MAP CANVAS -->
<div id="canvas" class="abs">
<svg id="map" class="abs" style="left:0;top:0" width="598" height="675" viewBox="343 125 598 675">
<g fill="none" stroke="#2c2c2c" stroke-width="1" stroke-linejoin="round">
<path d="M467.5 262.1 L469.5 260.7 L471.8 259.9 L473.6 258.1 L475.7 257.0 L477.5 258.3 L479.1 259.9 L481.0 258.7 L483.1 258.6 L485.4 258.9 L487.3 257.9 L489.3 257.0 L491.7 256.8 L493.6 255.5 L495.8 254.7 L497.8 253.6 L499.7 254.6 L502.3 254.2 L503.8 256.1 L506.4 256.7 L508.9 256.1 L508.7 258.3 L508.9 260.6 L510.6 262.7 L510.7 264.9 L509.7 267.2 L511.0 269.6 L511.1 272.3 L509.4 274.0 L507.2 274.9 L505.5 276.5 L503.4 276.3 L501.3 275.7 L499.1 276.4 L497.0 275.7 L495.0 276.3 L493.0 277.1 L491.4 278.7 L489.3 279.1 L486.7 278.6 L484.5 280.0 L482.1 280.1 L480.0 281.6 L477.3 280.8 L474.9 279.1 L473.9 276.2 L474.0 273.1 L472.1 271.6 L470.5 269.8 L468.9 268.0 L468.6 264.9 Z"/>
<path d="M480.0 281.6 L481.7 285.0 L480.7 287.5 L480.3 290.2 L479.1 292.7 L477.6 294.6 L475.6 295.7 L473.0 296.1 L472.0 298.6 L469.8 299.5 L467.7 298.9 L465.5 298.6 L463.4 299.2 L462.0 301.3 L459.6 301.2 L460.4 303.8 L461.3 306.3 L461.9 309.1 L465.1 310.2 L465.5 313.1 L467.5 314.1 L469.4 315.3 L471.6 316.0 L473.2 317.7 L473.7 320.1 L474.9 322.2 L475.7 324.5 L474.0 326.3 L471.5 326.2 L470.1 328.1 L469.4 330.3 L468.3 332.3 L468.1 334.7 L468.0 337.6 L469.8 339.8 L469.8 342.1 L470.2 344.3 L470.6 346.6 L473.0 347.6 L473.7 350.3 L475.7 351.7 L478.1 352.3 L480.4 353.3 L482.5 354.6 L485.1 354.7 L487.3 355.8 L489.3 357.3 L491.5 356.4 L494.1 357.1 L496.1 355.6 L499.9 354.6 L501.7 357.1 L501.2 360.2 L501.3 362.6 L499.4 364.1 L498.7 366.1 L496.3 367.1 L495.0 369.2 L493.6 371.2 L492.7 374.6 L495.1 374.9 L496.1 377.2 L499.5 377.2 L501.2 375.2 L503.8 375.7 L505.7 374.2 L508.0 373.8 L510.0 372.2 L512.8 372.7 L514.8 371.2 L517.4 370.1 L519.1 367.8 L520.3 365.9 L521.5 364.0 L522.5 361.9 L524.0 359.9 L525.0 357.6 L527.4 357.1 L528.7 355.1 L530.1 353.4 L531.7 351.0 L532.7 348.3 L535.0 346.9 L536.9 344.9 L538.7 342.8 L541.8 343.5 L543.7 341.5 L545.9 342.4 L548.2 342.4 L550.5 342.3 L553.1 341.7 L555.1 343.0 L557.3 344.0 L558.8 346.2 L561.1 347.4 L562.4 345.7 L565.3 346.1 L567.0 348.5 L569.2 350.0 L570.9 351.9 L573.9 351.7 L575.0 354.8 L577.7 355.1 L579.6 356.7 L582.0 357.6 L584.0 359.1 L586.2 360.2 L588.8 362.7 L587.9 359.3 L589.7 360.8 L591.9 361.6 L593.9 362.7 L595.4 364.4 L597.7 364.6 L599.4 366.5 L600.5 368.7 L600.9 371.4 L602.8 373.1 L603.5 375.1 L604.8 377.0 L604.2 379.4 L604.5 381.6 L606.2 383.3 L606.8 385.5 L607.7 387.7 L607.0 390.1 L608.4 392.2 L609.6 394.3 L611.0 396.4 L612.1 398.6 L612.3 401.2 L614.9 402.5 L614.5 405.4 L616.4 407.1 L617.4 409.6 L617.1 412.0 L616.1 414.5 L616.6 417.0 L615.0 419.3 L614.9 422.1 L618.3 423.0 L621.2 424.0 L624.2 423.8 L625.3 426.5 L626.8 428.9 L628.8 431.1 L631.0 433.2 L633.5 435.0 L636.1 436.6 L637.2 438.8 L639.1 440.5 L640.4 442.5 L642.0 444.3 L643.8 445.9 L643.4 448.0 L643.8 450.2 L640.4 451.9 L642.1 454.4 L645.5 452.7 L648.4 453.2 L651.4 453.6 L653.4 454.5 L655.7 454.4"/>
<path d="M508.9 256.1 L510.5 254.6 L511.4 252.7 L513.8 251.8 L514.6 249.5 L515.7 247.4 L517.4 245.9 L518.0 243.8 L519.1 242.0 L519.9 240.0 L518.2 236.6 L521.1 235.9 L523.3 234.0 L524.8 231.8 L526.9 230.2 L528.4 228.0 L531.8 227.2 L531.1 230.0 L532.7 232.3 L533.4 235.5 L531.8 238.3 L534.1 239.4 L535.1 241.8 L536.9 243.4 L538.4 245.0 L540.2 246.3 L542.0 247.6 L544.1 247.3 L546.3 247.6 L548.0 250.2 L547.1 252.2 L547.1 254.4 L548.6 256.7 L550.5 258.7 L552.2 261.2 L554.2 260.0 L556.5 259.5 L555.6 257.0 L552.2 255.3 L554.2 253.6 L553.9 251.0 L555.4 249.5 L556.1 247.4 L557.7 245.9 L559.0 244.2 L560.6 241.6 L562.4 239.1 L562.9 236.8 L562.4 234.3 L564.1 232.3 L563.4 229.8 L563.3 227.2 L565.4 226.5 L566.7 224.7 L569.1 224.8 L570.9 226.4 L571.8 229.3 L572.6 232.3 L573.9 234.3 L575.6 235.6 L577.7 236.6 L580.4 236.4 L581.7 233.3 L584.5 233.2 L586.7 232.4 L589.0 231.8 L591.3 231.5 L591.7 233.9 L593.0 236.0 L594.3 239.5 L597.7 237.8 L598.2 235.2 L595.9 232.9 L596.8 230.2 L596.3 227.8 L593.6 226.7 L593.4 224.2 L595.1 221.9 L596.0 219.1 L598.7 217.2 L601.9 217.4 L604.0 218.6 L605.8 220.3 L608.3 220.5 L610.4 221.7"/>
<path d="M608.7 205.5 L611.3 204.8 L614.0 204.4 L616.4 203.0 L618.0 204.5 L619.8 205.8 L621.5 207.2 L623.7 208.5 L626.1 208.4 L628.5 207.7 L630.8 208.1 L633.0 206.4 L632.3 203.2 L634.2 201.3 L636.8 200.4 L638.6 198.3 L641.0 197.0 L643.1 196.7 L645.3 196.6 L647.4 195.9 L649.5 195.3 L651.5 196.2 L654.0 195.1 L656.1 195.5 L658.0 197.0 L660.3 196.3 L661.9 194.3 L664.0 193.2 L666.5 192.8 L668.2 191.1 L670.9 192.3 L672.8 191.3 L675.0 191.1 L676.7 189.4 L677.6 192.8 L675.9 195.0 L673.3 196.2 L675.0 197.6 L677.2 198.4 L678.4 200.4 L679.6 203.3 L681.8 205.5 L682.5 208.7 L685.2 210.6 L683.0 212.8 L680.1 214.0 L677.2 213.8 L675.0 215.7 L673.7 213.9 L671.6 213.2 L670.9 216.2 L669.9 219.1 L668.2 221.3 L664.9 220.5 L663.1 222.5 L664.0 225.0 L664.8 227.6 L663.9 230.0 L662.3 231.9 L664.2 234.2 L666.5 236.1 L668.2 239.5 L666.3 241.5 L664.8 243.8 L662.2 243.6 L660.5 246.2 L658.0 246.3 L656.8 249.2 L657.2 252.3 L655.6 250.1 L652.9 249.7 L650.2 249.9 L648.4 252.1 L646.1 253.1 L645.3 255.1 L643.0 256.1 L642.2 258.2 L641.0 259.9 L639.9 261.8 L638.0 263.3 L638.0 265.8 L636.8 267.6 L634.8 269.3 L632.3 269.0 L630.0 269.3 L627.6 268.4 L627.6 265.5 L625.7 264.2 L624.0 261.6 L621.0 261.8 L618.1 262.5 L616.1 263.8 L613.8 264.2 L613.1 262.0 L613.0 259.6 L611.8 257.5 L612.0 255.0 L610.4 253.1 L611.2 251.0 L612.8 249.1 L613.9 247.1 L613.8 244.6 L615.2 242.6 L613.8 240.3 L615.1 238.3 L614.7 236.1 L612.3 234.1 L612.1 231.0 L613.8 228.7 L616.4 227.6 L614.1 227.0 L613.9 224.1 L611.3 223.8 L610.4 221.7 L609.5 219.8 L608.6 217.9 L607.8 215.9 L607.0 214.0 L607.0 211.8 L608.0 209.8 L609.5 207.9 Z"/>
<path d="M685.2 210.6 L687.6 211.3 L689.9 212.3 L692.1 213.3 L694.8 213.2 L697.1 214.0 L699.6 213.4 L701.9 214.3 L704.1 215.8 L706.8 214.2 L709.0 215.7 L711.3 215.4 L713.5 216.7 L715.8 216.7 L718.1 216.3 L720.3 217.0 L722.6 216.6 L724.7 217.0 L727.0 216.3 L729.1 216.3 L731.2 217.3 L733.2 218.7 L735.4 218.3 L735.4 222.5 L733.6 224.0 L731.7 225.3 L729.4 225.9 L728.1 228.0 L726.8 230.1 L724.3 231.0 L726.0 234.4 L728.1 235.0 L730.5 234.9 L732.3 236.6 L734.5 237.0 L734.5 241.2 L733.6 243.7 L730.9 244.4 L729.4 246.3 L732.2 247.6 L734.5 249.7 L735.4 252.1 L733.4 254.2 L733.7 256.5 L732.0 259.9 L735.0 259.7 L737.9 259.9 L741.1 260.6 L743.0 263.3 L744.6 265.2 L745.1 267.6 L742.2 270.1 L739.6 268.4 L740.3 266.3 L740.5 264.2 L738.4 263.6 L736.7 262.0 L734.5 261.6 L731.1 263.3 L728.7 263.3 L726.5 264.0 L724.3 265.0 L722.1 264.5 L719.9 263.5 L717.5 264.2 L715.1 265.5 L713.3 267.6 L711.2 268.4 L710.0 270.8 L707.2 270.2 L705.6 271.8 L703.1 272.2 L701.6 274.4 L699.7 275.7 L696.8 275.6 L695.4 277.8 L693.9 280.1 L691.0 280.1 L688.4 280.6 L686.9 282.9 L686.4 285.7 L684.2 287.8 L683.5 290.5 L682.7 292.9 L684.4 294.7 L684.4 297.0 L685.2 299.0 L686.4 301.9 L688.6 304.1 L691.4 304.8 L693.7 306.7 L692.9 309.7 L692.0 312.6 L690.4 314.2 L688.7 315.8 L687.8 317.9 L684.4 316.2 L684.2 318.5 L684.1 320.9 L684.5 323.2 L683.5 325.5 L684.2 328.0 L683.7 330.7 L684.7 333.2 L685.2 335.7 L686.5 337.9 L687.1 340.3 L686.1 343.2 L687.1 345.4 L688.6 347.6 L689.6 349.6 L692.3 350.3 L692.3 353.0 L693.8 354.6 L695.4 356.1 L696.4 358.3 L698.6 358.9 L700.5 359.9 L702.0 361.5 L704.6 361.6 L705.6 363.8 L707.4 365.5 L709.7 366.1 L712.2 366.5 L714.1 368.0 L715.2 370.0 L716.8 371.5 L719.8 371.0 L721.2 372.8 L722.5 374.6 L724.3 375.7 L726.3 377.0 L728.5 377.8 L730.8 378.6 L731.9 381.5 L734.5 381.6 L737.3 383.2 L740.5 383.3 L742.4 385.2 L743.6 387.4 L743.9 390.1 L743.4 392.6 L744.5 394.6 L744.6 396.8 L746.4 398.6 L747.0 401.1 L749.2 402.9 L749.8 405.4 L750.9 407.9 L752.3 410.2 L754.1 411.9 L754.2 414.1 L754.4 416.3 L754.7 418.5 L755.7 420.4"/>
<path d="M713.3 267.6 L711.9 265.2 L711.5 262.5 L710.7 259.9 L708.3 258.7 L705.6 258.2 L703.2 258.8 L700.9 259.5 L698.8 260.8 L696.3 259.8 L693.7 259.1 L692.0 257.3 L691.2 254.9 L689.3 253.3 L687.8 251.4 L686.4 249.5 L686.1 247.2 L686.5 245.0 L687.8 243.2 L688.6 241.2 L687.1 239.6 L685.7 237.7 L684.2 236.1 L682.7 234.4 L684.2 232.2 L685.4 229.8 L686.9 227.6 L688.1 225.6 L690.5 225.3 L692.5 224.4 L693.7 222.5 L694.8 220.5 L695.3 218.2 L696.5 216.2 L697.1 214.0"/>
<path d="M542.0 247.6 L542.9 249.3 L542.2 251.4 L541.3 253.4 L539.0 254.4 L537.8 256.1 L537.7 258.6 L535.8 260.5 L535.6 262.9 L537.1 264.8 L538.2 266.8 L538.6 269.0 L538.6 271.4 L538.4 273.8 L540.6 275.1 L542.1 276.8 L542.0 279.1 L543.9 280.7 L544.6 283.3 L546.3 285.0 L543.9 286.9 L542.0 289.3 L541.2 291.8 L538.2 290.8 L535.2 290.1 L533.5 291.9 L533.9 294.4 L534.4 297.1 L535.9 299.5 L536.9 302.0 L538.2 304.8 L540.3 307.1 L542.7 308.0 L544.9 307.3 L547.1 306.3 L548.3 308.5 L551.1 309.1 L552.2 311.4 L553.6 313.2 L554.3 315.5 L556.2 317.0 L557.3 319.0 L558.1 321.7 L559.8 323.8 L561.6 325.8 L561.2 328.4 L562.1 330.9"/>
<path d="M624.0 261.6 L623.3 263.9 L621.2 265.7 L621.5 268.4 L619.6 270.3 L619.4 273.0 L618.1 275.2 L618.2 277.3 L617.3 279.6 L618.9 281.6 L618.9 283.7 L619.5 286.2 L620.5 288.5 L622.3 290.5 L624.0 291.8 L626.2 292.4 L627.3 294.4 L629.1 295.6 L630.6 297.3 L632.0 299.2 L633.8 300.5 L635.9 301.6 L637.6 303.0 L638.9 304.9 L641.0 305.8 L642.8 307.1 L644.8 307.7 L646.8 308.5 L648.7 309.4"/>
<path d="M562.4 326.2 L564.4 324.4 L566.7 322.8 L567.4 320.7 L567.2 318.5 L565.4 316.5 L565.0 313.9 L565.4 311.5 L566.7 309.4 L567.5 307.1 L568.4 304.3 L570.9 302.9 L573.4 302.1 L576.0 302.0 L578.6 301.4 L580.7 302.7 L582.8 303.7 L585.2 303.3 L587.5 302.4 L589.6 301.2 L591.4 302.4 L593.3 303.5 L595.6 304.0 L596.8 306.0 L598.6 307.8 L600.9 307.6 L603.0 308.6 L605.3 308.5 L607.6 309.0 L609.4 310.4 L612.0 310.5 L613.2 313.1 L615.5 313.6 L617.8 313.1 L618.9 310.3 L621.5 310.2 L624.0 311.0 L626.4 312.4 L629.1 312.8 L630.8 311.1 L632.9 310.6 L635.0 310.5 L637.1 310.3 L639.3 310.2 L641.6 309.0 L644.0 309.8 L646.4 309.8 L648.7 309.4 L650.8 310.9 L653.1 312.0 L655.2 313.5 L658.0 313.6 L660.2 313.0 L660.8 310.3 L662.9 309.5 L664.8 308.5 L666.9 307.5 L669.0 307.3 L671.2 307.8 L673.3 307.7 L675.3 308.2 L677.3 309.0 L679.7 308.1 L681.7 308.8 L683.5 310.2 L684.0 313.2 L684.4 316.2"/>
<path d="M499.9 354.6 L502.1 357.6 L505.1 357.9 L508.0 358.5 L510.5 357.8 L513.1 357.6 L513.9 355.6 L514.3 353.4 L515.7 351.7 L517.4 349.4 L518.2 346.6 L520.1 344.6 L521.6 342.3 L522.1 340.0 L522.3 337.6 L523.3 335.5 L525.5 336.7 L527.6 338.1 L529.6 335.7 L532.7 335.5 L535.2 334.8 L537.8 335.5 L539.5 332.1 L542.9 333.0 L543.7 335.1 L544.6 337.2 L545.0 334.9 L547.1 333.8 L548.9 332.2 L550.5 330.4 L551.4 326.7 L553.5 327.4 L555.6 327.9 L558.1 328.2 L559.7 330.0 L561.6 331.3"/>
<path d="M562.1 330.4 L564.5 330.7 L566.8 331.9 L569.2 332.1 L571.0 334.6 L573.5 336.4 L572.2 338.5 L570.9 340.6 L573.6 340.4 L576.0 341.5 L578.0 342.2 L580.0 343.1 L582.0 344.0 L583.7 342.2 L584.5 339.8 L587.1 339.2 L589.6 338.1 L591.8 339.5 L593.9 340.9 L595.1 343.4 L597.0 344.5 L598.8 345.5 L600.7 346.6 L601.9 348.5 L604.0 349.0 L606.2 349.4 L608.3 350.4 L610.4 351.0 L612.4 352.4 L614.8 352.9 L616.2 355.3 L618.9 355.3 L621.2 355.3 L623.3 356.6 L625.7 356.1 L627.7 357.3 L629.3 359.1 L631.7 359.5 L632.6 357.0 L635.1 356.1 L638.2 356.4 L641.0 357.8 L643.6 356.2 L646.1 354.4 L648.9 353.1 L651.2 351.0 L652.6 353.6 L655.5 354.4 L658.0 355.2 L660.4 356.4 L663.1 356.1 L661.8 357.9 L660.8 359.8 L660.6 362.1 L661.1 364.5 L662.4 366.6 L663.1 368.9 L665.2 370.6 L668.0 371.0 L669.9 373.1 L671.9 374.8 L674.7 374.1 L676.7 375.7 L679.7 376.3 L682.7 376.5 L685.3 376.8 L686.9 374.8 L687.9 372.8 L689.2 370.9 L690.3 368.9 L692.3 366.7 L692.9 363.8 L695.4 365.5 L696.3 368.0 L698.4 369.3 L700.5 370.6 L703.9 368.9 L704.2 366.2 L705.6 363.8"/>
<path d="M582.0 344.0 L583.2 346.1 L584.5 348.2 L586.2 350.0 L587.5 352.3 L590.0 353.6 L591.3 355.9 L592.6 358.9 L595.6 360.2 L593.9 362.7"/>
<path d="M686.9 374.8 L686.6 377.4 L688.6 379.1 L686.5 381.2 L684.4 383.3 L682.9 385.8 L681.8 388.4 L680.7 390.8 L678.1 392.4 L677.6 395.2 L679.5 396.6 L680.2 398.9 L682.3 400.1 L683.5 402.0 L681.2 404.1 L678.4 405.4 L676.6 407.4 L674.8 409.4 L674.2 412.2 L674.5 414.5 L675.2 416.7 L675.0 419.0 L674.0 421.0 L674.2 423.3 L673.5 425.3 L673.3 427.5 L671.0 428.9"/>
<path d="M684.4 383.3 L686.1 385.2 L688.6 385.0 L689.7 387.3 L692.0 388.4 L694.4 388.6 L696.2 390.7 L698.8 390.1 L700.5 392.3 L702.2 394.4 L704.9 394.1 L707.3 392.7 L708.3 395.1 L708.5 397.8 L709.0 400.3 L711.0 402.0 L709.6 405.0 L710.6 407.0 L712.4 408.8 L713.7 410.8 L714.3 412.8 L714.8 414.9 L714.1 417.3 L715.2 419.6 L717.7 420.5 L719.2 422.4 L721.8 423.2 L724.3 424.1 L726.6 425.2 L728.6 426.7 L728.2 429.1 L727.7 431.5"/>
<path d="M598.7 432.3 L601.0 430.7 L603.8 430.6 L606.8 431.1 L609.8 431.5 L610.2 429.2 L612.3 428.1 L612.8 430.2 L613.2 432.3 L612.1 434.4 L611.5 436.6 L609.5 435.4 L607.2 434.9 L604.3 435.5 L601.3 435.7 L599.5 434.4 Z"/>
<ellipse cx="683.2" cy="374.2" rx="0.8" ry="0.8"/>
<ellipse cx="590.5" cy="396.7" rx="0.5" ry="0.5"/>
<ellipse cx="587.1" cy="418.0" rx="0.9" ry="1.3"/>
<ellipse cx="597.5" cy="444.2" rx="1.0" ry="1.0"/>
<ellipse cx="607.2" cy="457.8" rx="1.0" ry="1.0"/>
<ellipse cx="632.2" cy="455.8" rx="1.2" ry="1.8"/>
<ellipse cx="640.9" cy="462.0" rx="0.8" ry="0.8"/>
</g>
<g fill="#ea0008" stroke="#5a0a10" stroke-width="1" stroke-linejoin="round">
<path d="M655.7 454.4 L656.5 451.0 L659.1 449.9 L661.6 448.5 L661.7 446.3 L662.5 444.2 L665.3 443.4 L666.7 440.8 L668.8 439.0 L670.1 436.6 L668.8 434.1 L667.6 431.5 L669.1 429.9 L671.0 428.9 L674.4 429.8 L675.7 431.7 L676.1 434.0 L677.9 435.8 L678.6 438.3 L681.1 437.6 L683.7 437.4 L685.2 439.3 L687.1 440.8 L687.6 443.1 L688.8 445.1 L691.2 446.3 L693.9 446.8 L694.8 449.3 L697.3 450.2 L700.7 451.9 L702.0 449.8 L704.1 448.5 L706.7 447.2 L709.2 445.9 L711.7 445.4 L711.8 442.2 L714.3 441.7 L716.7 440.1 L719.4 439.1 L722.0 437.5 L724.5 435.7 L726.8 435.7 L727.4 433.6 L727.7 431.5 L729.7 432.6 L731.9 433.2 L734.4 432.2 L737.0 431.5 L738.9 430.3 L740.4 428.7 L742.1 427.2 L744.7 426.3 L746.0 423.4 L748.9 423.0 L750.9 421.5 L753.4 421.3 L755.7 420.4 L757.2 422.2 L758.1 424.4 L757.8 426.9 L759.1 428.9 L760.8 430.8 L761.3 433.4 L762.5 435.6 L764.2 437.4 L765.7 439.3 L767.3 441.1 L769.4 442.4 L771.0 444.2 L773.3 444.7 L774.4 446.7 L775.9 448.3 L777.8 449.3 L779.8 450.7 L781.3 452.6 L782.5 454.8 L784.6 456.1 L787.1 456.7 L788.9 458.8 L791.4 459.5 L791.1 462.1 L793.1 463.8 L795.0 464.7 L796.5 466.3 L798.7 467.3 L801.1 467.9 L803.3 468.9 L805.1 471.0 L807.7 471.4 L810.1 472.3 L812.2 472.9 L814.4 471.8 L816.5 472.3 L818.6 472.3 L821.1 472.1 L823.6 470.7 L826.3 472.7 L828.8 471.4 L831.1 471.6 L832.8 469.4 L835.3 470.7 L837.3 469.7 L839.4 469.3 L841.6 469.4 L843.7 469.0 L845.8 468.4 L848.9 467.6 L851.8 468.9 L853.4 470.5 L854.7 472.3 L853.4 474.3 L854.3 476.5 L852.9 478.9 L850.9 480.8 L849.7 482.8 L848.1 484.4 L845.8 485.0 L845.8 487.8 L844.1 490.1 L845.2 492.4 L846.7 494.4 L848.0 496.8 L850.5 497.5 L852.6 498.6 L854.7 499.6 L856.4 501.4 L859.1 500.8 L861.1 502.0 L863.6 502.5 L865.6 504.3 L867.8 505.3 L870.3 505.9 L872.8 505.9 L875.0 506.5 L877.0 508.1 L879.2 508.8 L881.5 509.3 L884.0 509.2 L886.0 510.7 L888.4 511.2 L890.4 512.6 L892.8 513.0 L895.0 513.8 L896.9 514.9 L898.9 515.8 L900.3 517.8 L902.0 519.1 L904.6 519.2 L906.3 520.5 L907.9 522.0 L910.3 521.9 L911.9 523.4 L913.6 524.8 L915.2 526.2 L917.6 526.2 L919.9 526.8 L922.1 528.0 L924.3 529.0 L927.0 528.8 L928.8 530.7 L931.0 531.5 L933.5 531.9 L935.5 533.4 L937.8 534.0 L940.1 535.8 L941.0 538.6 L943.8 538.1 L946.0 540.0 L946.0 542.2 L945.8 544.4 L946.4 546.6 L945.4 548.8 L946.2 551.0 L946.4 553.2 L945.7 555.4 L947.1 557.6 L946.5 559.8 L946.0 562.0 L943.5 561.5 L941.0 561.0 L940.1 558.9 L938.2 557.7 L937.1 555.8 L935.6 554.3 L933.3 554.5 L931.1 553.5 L929.0 552.3 L926.6 553.2 L924.3 553.5 L922.2 551.6 L919.8 553.0 L917.6 552.3 L915.3 552.1 L913.1 550.9 L911.1 549.2 L908.2 549.5 L906.3 547.6 L903.9 548.6 L901.8 546.7 L899.6 546.3 L897.3 546.2 L895.0 546.4 L892.6 547.6 L891.9 550.1 L890.5 552.1 L889.5 554.3 L888.2 556.4 L887.8 558.8 L887.2 561.1 L884.8 562.4 L885.1 565.6 L883.1 567.2 L881.5 569.0 L882.7 571.6 L880.9 574.2 L881.5 576.8 L880.6 579.2 L878.7 581.1 L877.0 583.1 L877.0 585.9 L877.9 587.8 L878.9 589.7 L879.9 591.6 L880.4 593.7 L882.9 594.0 L885.1 595.0 L887.0 596.7 L889.4 597.1 L891.4 598.0 L893.5 598.9 L895.6 599.7 L897.3 601.3 L899.6 601.6 L901.0 603.3 L903.0 604.4 L904.3 606.2 L906.3 607.3 L906.7 609.8 L907.7 612.3 L906.1 615.0 L907.4 617.4 L907.4 619.7 L908.7 621.8 L907.5 624.3 L908.6 626.4 L910.8 629.8 L908.6 631.9 L906.7 634.3 L904.7 635.6 L902.3 633.5 L900.3 634.7 L898.2 635.1 L895.6 635.7 L893.5 637.3 L891.3 638.6 L889.2 640.8 L887.0 642.8 L887.3 645.2 L884.9 646.6 L884.8 648.8 L885.5 651.4 L886.2 654.0 L886.7 656.2 L886.5 658.6 L887.0 660.8 L885.7 663.4 L884.5 666.0 L882.2 667.3 L880.7 669.6 L878.5 671.1 L876.8 673.1 L875.9 675.9 L873.3 677.1 L872.4 679.5 L870.6 681.4 L869.9 683.9 L868.4 686.0 L869.0 688.6 L868.2 690.8 L866.1 692.2 L863.9 693.4 L861.7 692.3 L859.7 693.8 L857.5 693.1 L855.4 693.7 L853.6 691.6 L850.8 691.7 L848.5 690.8 L848.5 687.6 L846.8 684.8 L846.6 682.4 L847.5 680.2 L847.6 677.9 L849.6 676.7 L851.6 675.7 L853.6 674.5 L855.2 672.8 L856.4 671.0 L856.2 668.5 L856.3 666.1 L856.9 663.9 L857.9 661.7 L857.0 659.4 L855.4 657.4 L854.2 655.0 L854.5 652.3 L857.3 650.8 L859.6 648.8 L862.7 648.3 L865.6 647.1 L867.2 644.8 L869.1 642.8 L869.5 639.8 L869.1 636.9 L866.9 635.8 L866.9 633.1 L864.3 632.4 L863.9 630.0 L862.5 628.1 L861.7 626.0 L861.1 623.7 L860.3 621.7 L860.7 619.5 L859.7 617.6 L858.8 615.6 L858.6 613.5 L857.7 611.3 L857.2 608.8 L855.0 607.4 L854.0 605.2 L852.6 603.3 L852.4 600.9 L850.7 599.1 L848.7 597.6 L849.6 594.6 L847.5 593.1 L848.3 590.4 L845.5 588.2 L846.2 585.5 L845.8 582.9 L844.6 581.0 L843.4 579.0 L841.7 577.5 L839.9 576.1 L837.7 575.4 L835.6 574.4 L834.4 576.4 L832.2 577.2 L830.5 578.7 L827.7 577.5 L824.6 577.8 L822.6 576.6 L821.2 574.9 L820.3 572.7 L817.8 571.9 L814.9 572.2 L812.7 570.2 L810.6 569.2 L808.5 568.2 L806.7 566.8 L807.9 564.9 L808.0 562.6 L809.3 560.8 L807.8 558.8 L807.3 556.4 L806.7 554.0 L805.5 551.7 L804.0 549.7 L803.3 547.2 L801.6 545.5 L799.9 543.8 L797.2 544.1 L794.8 545.5 L792.3 545.2 L790.0 545.5 L788.0 547.2 L785.6 548.6 L783.0 549.2 L780.4 549.8 L782.9 548.1 L784.2 545.1 L787.2 543.8 L786.9 541.1 L784.6 539.6 L781.8 538.3 L779.5 536.2 L777.0 537.1 L774.4 537.9 L771.9 537.1 L769.3 537.0 L767.2 535.4 L767.0 532.6 L765.5 530.6 L764.2 528.5 L761.9 527.0 L761.8 524.1 L761.1 521.7 L759.1 520.0 L757.4 518.0 L758.5 515.3 L757.4 513.1 L754.4 513.4 L751.5 513.9 L748.4 514.4 L745.5 515.6 L743.4 514.2 L741.4 512.5 L738.7 512.2 L736.5 512.7 L734.1 512.2 L731.9 513.1 L729.7 514.2 L727.2 514.3 L725.1 515.6 L722.8 514.3 L721.2 512.3 L719.4 510.5 L717.5 507.8 L714.3 507.1 L712.1 506.2 L709.7 506.1 L707.5 505.4 L705.5 504.2 L704.3 502.4 L703.3 500.3 L701.7 498.2 L700.4 495.9 L698.2 494.4 L696.7 492.7 L695.0 491.2 L693.1 490.1 L690.5 488.4 L688.0 486.7 L687.4 483.9 L684.9 482.3 L683.7 479.9 L681.7 478.5 L680.8 476.0 L678.6 474.8 L675.7 474.4 L672.7 474.0 L671.1 472.4 L669.5 470.9 L668.4 468.9 L667.1 467.0 L666.5 464.7 L665.0 462.9 L663.1 460.6 L660.8 458.7 L658.5 457.9 L657.6 455.6 Z"/>
<path d="M707.4 699.4 L708.9 697.8 L709.7 695.5 L711.7 694.3 L714.5 693.5 L716.8 691.7 L718.5 688.3 L720.0 689.9 L721.1 691.7 L723.0 693.2 L724.5 695.1 L726.9 695.1 L729.3 694.9 L731.4 693.4 L732.2 690.6 L733.9 688.3 L736.6 687.7 L739.1 686.5 L741.6 685.5 L744.2 685.7 L744.5 688.5 L746.8 690.0 L749.4 690.0 L751.9 690.8 L753.1 692.8 L755.4 693.4 L757.8 693.8 L759.7 695.7 L762.2 696.0 L764.7 696.9 L766.6 694.2 L769.1 695.1 L771.3 693.9 L773.8 693.7 L775.9 692.5 L778.5 692.7 L781.1 692.5 L783.5 694.4 L786.2 693.4 L788.8 693.0 L791.2 691.4 L794.0 692.7 L796.5 691.7 L798.3 689.7 L801.3 690.7 L803.3 689.1 L804.7 687.1 L806.7 685.7 L808.9 685.1 L811.3 685.3 L813.2 683.8 L815.3 683.1 L817.8 682.7 L820.1 683.1 L822.1 684.8 L824.5 684.4 L826.4 683.0 L828.1 681.4 L828.5 679.0 L829.9 677.1 L830.6 679.2 L832.4 680.6 L834.5 679.4 L836.5 678.0 L838.2 676.2 L841.7 674.5 L844.1 673.8 L845.9 675.4 L844.2 678.8 L843.6 681.4 L841.9 683.7 L841.7 686.5 L839.9 688.4 L838.6 690.5 L838.8 693.6 L836.5 695.1 L835.3 697.2 L834.0 699.2 L832.2 700.9 L832.2 703.6 L832.2 705.9 L831.2 708.0 L830.3 710.0 L829.7 712.2 L828.2 714.1 L828.2 716.6 L826.3 718.3 L826.2 720.8 L826.8 722.9 L826.0 725.0 L826.6 727.2 L826.2 729.3 L828.2 730.6 L830.6 731.2 L832.4 732.8 L833.6 735.8 L832.4 738.8 L833.2 741.5 L835.1 743.5 L836.7 745.6 L835.6 748.1 L833.7 750.1 L832.4 752.5 L831.1 754.4 L831.8 756.9 L830.6 758.9 L829.9 761.0 L829.9 763.7 L830.7 766.2 L827.3 767.0 L824.9 765.4 L822.1 764.5 L819.9 765.0 L817.7 766.2 L815.3 765.3 L813.4 763.8 L811.1 763.8 L808.9 763.4 L806.7 762.8 L804.6 762.1 L802.8 760.9 L800.7 760.2 L799.6 758.3 L798.4 756.5 L798.2 754.2 L796.1 752.9 L794.4 751.1 L793.0 749.1 L790.5 748.3 L788.1 747.5 L786.2 745.6 L784.0 744.9 L781.5 746.0 L779.3 744.8 L776.2 744.7 L773.3 745.6 L770.9 745.1 L769.4 743.1 L767.3 742.2 L765.6 739.9 L762.8 739.2 L760.5 737.9 L757.7 737.1 L755.4 735.4 L753.1 734.2 L750.8 733.0 L748.5 731.9 L746.0 731.4 L744.8 729.4 L743.4 727.6 L740.9 726.2 L738.2 725.1 L735.9 724.9 L733.7 723.9 L731.4 723.4 L729.3 722.0 L727.0 721.2 L724.5 720.8 L721.9 720.5 L719.3 721.0 L716.8 721.7 L714.1 720.1 L711.7 718.2 L710.0 715.7 L708.3 713.1 L707.2 710.6 L706.5 708.0 L706.5 705.8 L706.8 703.7 L706.0 701.4 Z"/>
<path d="M525.0 527.0 L524.2 529.1 L523.0 531.0 L521.5 533.0 L520.0 535.0 L521.7 537.2 L522.0 540.0 L524.0 540.7 L525.9 541.7 L528.0 542.0 L530.3 541.5 L532.8 542.5 L535.0 541.0 L536.5 538.9 L538.9 538.9 L541.0 538.0 L542.5 535.9 L545.3 536.6 L547.0 535.0 L549.2 533.9 L548.5 530.8 L550.8 529.8 L552.0 528.0 L554.7 526.8 L557.0 525.0 L560.0 524.0 L560.8 521.4 L562.0 519.0 L566.0 519.0 L567.4 517.2 L568.0 515.0 L571.0 517.0 L572.8 518.6 L571.8 521.2 L573.0 523.0 L576.0 525.0 L576.4 527.1 L577.3 529.0 L578.0 531.0 L579.9 533.3 L581.0 536.0 L582.1 538.3 L584.0 540.0 L584.3 543.0 L584.0 546.0 L584.5 548.4 L585.7 550.6 L586.0 553.0 L588.0 554.9 L587.8 557.7 L588.6 560.0 L587.6 561.9 L586.4 563.8 L586.0 566.0 L585.2 568.3 L583.4 570.0 L582.0 572.0 L581.1 574.9 L581.0 578.0 L581.9 580.0 L582.2 582.4 L584.0 584.0 L582.6 586.1 L584.2 588.6 L584.4 590.9 L583.0 593.0 L582.2 595.3 L581.5 597.7 L581.7 600.1 L581.6 602.6 L582.0 605.0 L582.2 607.4 L582.1 609.8 L580.8 612.1 L581.9 614.7 L581.0 617.0 L581.9 619.6 L581.2 622.1 L579.1 624.4 L580.0 627.0 L578.6 629.4 L580.0 632.0 L579.8 634.6 L579.0 637.0 L576.9 637.9 L575.0 639.0 L572.7 638.1 L571.5 635.5 L569.0 635.0 L566.3 634.4 L563.5 634.4 L561.0 633.0 L558.7 633.6 L557.9 636.0 L556.0 637.0 L555.2 639.6 L554.7 642.3 L554.0 645.0 L552.1 646.8 L549.9 648.2 L548.0 650.0 L544.9 650.0 L542.0 649.0 L540.1 651.5 L537.0 652.0 L534.5 650.1 L534.0 647.0 L532.2 645.4 L531.5 643.2 L531.0 641.0 L530.2 639.0 L529.5 637.0 L529.1 634.9 L528.0 633.0 L527.8 630.3 L526.8 627.7 L527.0 625.0 L527.0 621.9 L528.0 619.0 L527.9 616.5 L529.9 614.9 L531.3 613.2 L532.0 611.0 L532.4 608.5 L531.9 606.0 L531.9 603.5 L532.0 601.0 L531.6 598.7 L530.0 597.0 L529.0 595.0 L529.5 592.3 L529.4 589.7 L529.0 587.0 L530.1 585.1 L531.8 583.4 L532.0 581.0 L531.3 578.5 L531.2 576.0 L530.7 573.6 L531.0 571.0 L529.5 569.3 L530.0 566.5 L528.0 565.0 L528.1 562.2 L526.0 560.3 L525.0 558.0 L523.2 556.2 L521.0 555.0 L517.0 556.0 L518.5 554.3 L518.9 552.2 L519.0 550.0 L519.4 547.3 L518.0 545.0 L518.2 542.6 L520.0 541.0 L518.8 539.2 L518.5 537.0 L520.0 534.6 L521.0 532.0 L523.1 531.0 L523.7 528.7 Z"/>
</g>
<g fill="#b40012" stroke="#5a0a10" stroke-width="0.9">
<ellipse cx="722.6" cy="534.5" rx="0.8" ry="0.6"/>
<ellipse cx="725.0" cy="531.5" rx="0.6" ry="0.6"/>
<ellipse cx="742.1" cy="539.6" rx="0.7" ry="0.5"/>
<ellipse cx="762.5" cy="542.1" rx="2.8" ry="1.8" fill="#ea0008"/>
<ellipse cx="767.0" cy="540.0" rx="0.6" ry="0.5"/>
<ellipse cx="776.5" cy="551.8" rx="1.8" ry="1.0" fill="#ea0008"/>
<ellipse cx="824.6" cy="459.5" rx="1.1" ry="0.9"/>
<ellipse cx="834.3" cy="453.2" rx="0.4" ry="0.4"/>
<ellipse cx="826.3" cy="647.3" rx="1.0" ry="1.0"/>
<ellipse cx="820.8" cy="656.5" rx="0.8" ry="0.6"/>
<ellipse cx="810.0" cy="661.7" rx="1.1" ry="0.9"/>
<ellipse cx="814.3" cy="665.5" rx="1.5" ry="2.3" fill="#ea0008"/>
<ellipse cx="816.0" cy="670.0" rx="1.1" ry="1.3"/>
<ellipse cx="798.0" cy="661.7" rx="0.6" ry="0.5"/>
<ellipse cx="788.6" cy="663.4" rx="0.6" ry="0.6"/>
<ellipse cx="688.6" cy="700.2" rx="1.0" ry="0.9"/>
<ellipse cx="700.6" cy="702.0" rx="2.1" ry="1.3" fill="#ea0008"/>
<ellipse cx="701.5" cy="698.0" rx="0.6" ry="0.6"/>
<ellipse cx="522.0" cy="637.0" rx="2.0" ry="2.2" fill="#ea0008"/>
<ellipse cx="528.0" cy="643.0" rx="2.0" ry="3.6" fill="#ea0008"/>
<ellipse cx="687.7" cy="767.0" rx="3.8" ry="3.0" fill="#ea0008"/>
<ellipse cx="569.5" cy="517.5" rx="0.7" ry="0.6"/>
<ellipse cx="572.8" cy="519.6" rx="0.6" ry="0.6"/>
<ellipse cx="578.2" cy="528.5" rx="0.6" ry="0.6"/>
<ellipse cx="583.4" cy="538.5" rx="0.6" ry="0.6"/>
<ellipse cx="518.6" cy="553.5" rx="0.6" ry="0.6"/>
<ellipse cx="527.3" cy="589.5" rx="0.5" ry="0.5"/>
</g>
<g fill="none" stroke="#6a0810" stroke-width="1.35" stroke-linejoin="round">
<path d="M736.4 434.0 L735.3 436.1 L733.5 437.6 L732.1 439.4 L730.2 440.8 L728.0 443.0 L725.1 444.2 L724.3 446.6 L726.1 448.7 L726.0 451.0 L727.4 452.7 L727.9 455.2 L730.2 456.1 L731.0 458.3 L732.9 459.7 L734.5 461.2 L733.1 463.2 L731.1 464.6 L728.8 464.3 L726.6 463.4 L724.3 464.6 L722.3 466.0 L720.9 468.0 L721.4 470.6 L723.4 472.3 L725.5 473.0 L727.5 473.9 L729.8 474.0 L731.9 474.8 L733.9 476.7 L736.2 478.2 L736.7 480.5 L738.7 481.6 L741.3 481.5 L743.2 483.3 L745.5 484.2 L747.6 484.4 L749.8 483.8 L751.9 484.0 L754.0 484.2 L755.7 485.7 L757.3 487.4 L759.6 487.7 L761.7 488.4"/>
<path d="M761.7 488.4 L764.1 487.5 L765.7 485.1 L768.5 485.0 L770.4 483.5 L770.2 481.1 L771.0 479.1 L773.1 477.4 L775.3 475.7 L777.8 476.3 L779.5 478.2 L781.2 480.3 L782.9 482.5 L783.7 480.3 L785.8 479.1 L787.2 477.4 L788.6 475.6 L789.5 473.4 L790.6 471.4 L792.4 469.8 L794.0 468.0 L796.5 466.3"/>
<path d="M761.7 488.4 L763.5 490.2 L764.2 492.7 L763.0 495.6 L763.9 498.6 L762.8 501.4 L760.8 503.7 L761.6 506.4 L760.0 508.8 L758.8 511.0 L757.4 513.1"/>
<path d="M763.9 498.6 L765.0 501.0 L765.1 503.7 L765.9 501.5 L767.7 500.1 L769.3 498.6 L771.6 498.8 L773.8 497.7 L776.1 498.6 L778.4 499.6 L780.2 501.8 L782.9 502.0 L785.2 503.7 L788.0 504.6 L790.2 503.6 L792.6 503.0 L794.8 502.0 L797.0 501.1 L799.3 500.3 L801.6 499.5 L804.0 498.7 L805.9 496.9"/>
<path d="M810.1 472.3 L810.2 474.8 L811.3 477.4 L810.1 479.9 L809.3 482.9 L808.4 485.9 L806.2 488.1 L803.3 489.3 L802.8 491.9 L803.3 494.4 L805.9 496.9"/>
<path d="M805.9 496.9 L808.0 499.2 L809.3 502.0 L810.9 504.6 L812.7 507.1 L814.6 509.8 L817.8 510.5 L818.1 513.2 L816.9 515.6 L819.8 516.2 L822.0 518.2 L824.0 517.0 L826.1 516.6 L828.2 516.3 L830.5 517.3"/>
<path d="M830.5 517.3 L832.8 517.0 L834.9 515.7 L837.3 515.6 L839.5 513.6 L842.1 512.9 L845.0 513.1 L846.4 514.8 L848.8 515.5 L850.1 517.3 L851.2 519.8 L851.8 522.4 L853.6 523.7 L855.2 525.5 L857.7 525.8 L858.6 528.3 L860.6 529.7 L862.8 530.9 L865.3 532.7 L867.9 534.3 L870.2 534.4 L872.4 535.5 L874.7 534.3 L877.2 534.8 L879.2 533.1 L881.5 532.9 L882.0 535.6 L882.8 538.2 L883.8 540.8 L884.1 543.1 L884.9 545.3 L884.9 547.6 L887.3 547.9 L888.8 549.5 L890.5 550.9"/>
<path d="M830.5 517.3 L832.2 520.7 L832.9 523.5 L831.4 526.0 L828.7 526.7 L826.7 528.5 L824.6 530.2 L825.5 532.5 L823.6 534.7 L824.6 537.0 L826.1 539.2 L829.3 539.5 L830.5 542.1 L830.2 544.7 L831.7 546.6 L831.9 548.9 L833.9 550.6 L836.3 552.0 L837.0 554.8 L839.0 556.6 L840.3 558.3 L841.9 559.7 L843.4 561.1 L845.0 562.5 L843.7 564.6 L844.9 567.3 L843.3 569.3 L842.8 572.3 L840.7 574.4"/>
<path d="M845.8 578.7 L848.3 577.5 L850.9 577.9 L853.4 577.6 L856.0 577.8 L857.5 579.7 L859.4 581.2 L861.7 581.1 L863.9 580.7 L866.2 580.4 L868.2 579.1 L870.5 578.7 L870.6 576.5 L872.0 574.6 L872.3 572.4 L872.2 570.2 L874.7 570.0 L877.2 569.4 L879.8 569.3 L881.5 569.0"/>
</g>
<ellipse cx="902.8" cy="547.4" rx="1.5" ry="0.9" fill="#fff" stroke="#5a0a10" stroke-width="0.5"/>
</svg>
</div>
<svg id="grips" class="abs" style="left:0;top:0" width="941" height="800" viewBox="0 0 941 800"><rect x="186.0" y="429.6" width="1" height="1" fill="#b8b8bc"/><rect x="188.6" y="429.6" width="1" height="1" fill="#b8b8bc"/><rect x="191.2" y="429.6" width="1" height="1" fill="#b8b8bc"/><rect x="193.8" y="429.6" width="1" height="1" fill="#b8b8bc"/><rect x="196.4" y="429.6" width="1" height="1" fill="#b8b8bc"/><rect x="199.0" y="429.6" width="1" height="1" fill="#b8b8bc"/><rect x="339.6" y="497.0" width="1" height="1" fill="#b8b8bc"/><rect x="339.6" y="499.6" width="1" height="1" fill="#b8b8bc"/><rect x="339.6" y="502.2" width="1" height="1" fill="#b8b8bc"/><rect x="339.6" y="504.8" width="1" height="1" fill="#b8b8bc"/><rect x="339.6" y="507.4" width="1" height="1" fill="#b8b8bc"/><rect x="339.6" y="510.0" width="1" height="1" fill="#b8b8bc"/><rect x="339.6" y="512.6" width="1" height="1" fill="#b8b8bc"/></svg>
<svg id="cursor" class="abs" style="left:255px;top:258px" width="16" height="22" viewBox="255 258 16 22"><path d="M259 262 L267.2 268.6 L263.6 268.9 L267.1 275.6 L265.7 276.6 L262.2 269.9 L259.2 272 Z" fill="#000"/></svg>
<div id="edge-top" class="abs"></div>
<div id="edge-left" class="abs"></div>
</body>
</html>
